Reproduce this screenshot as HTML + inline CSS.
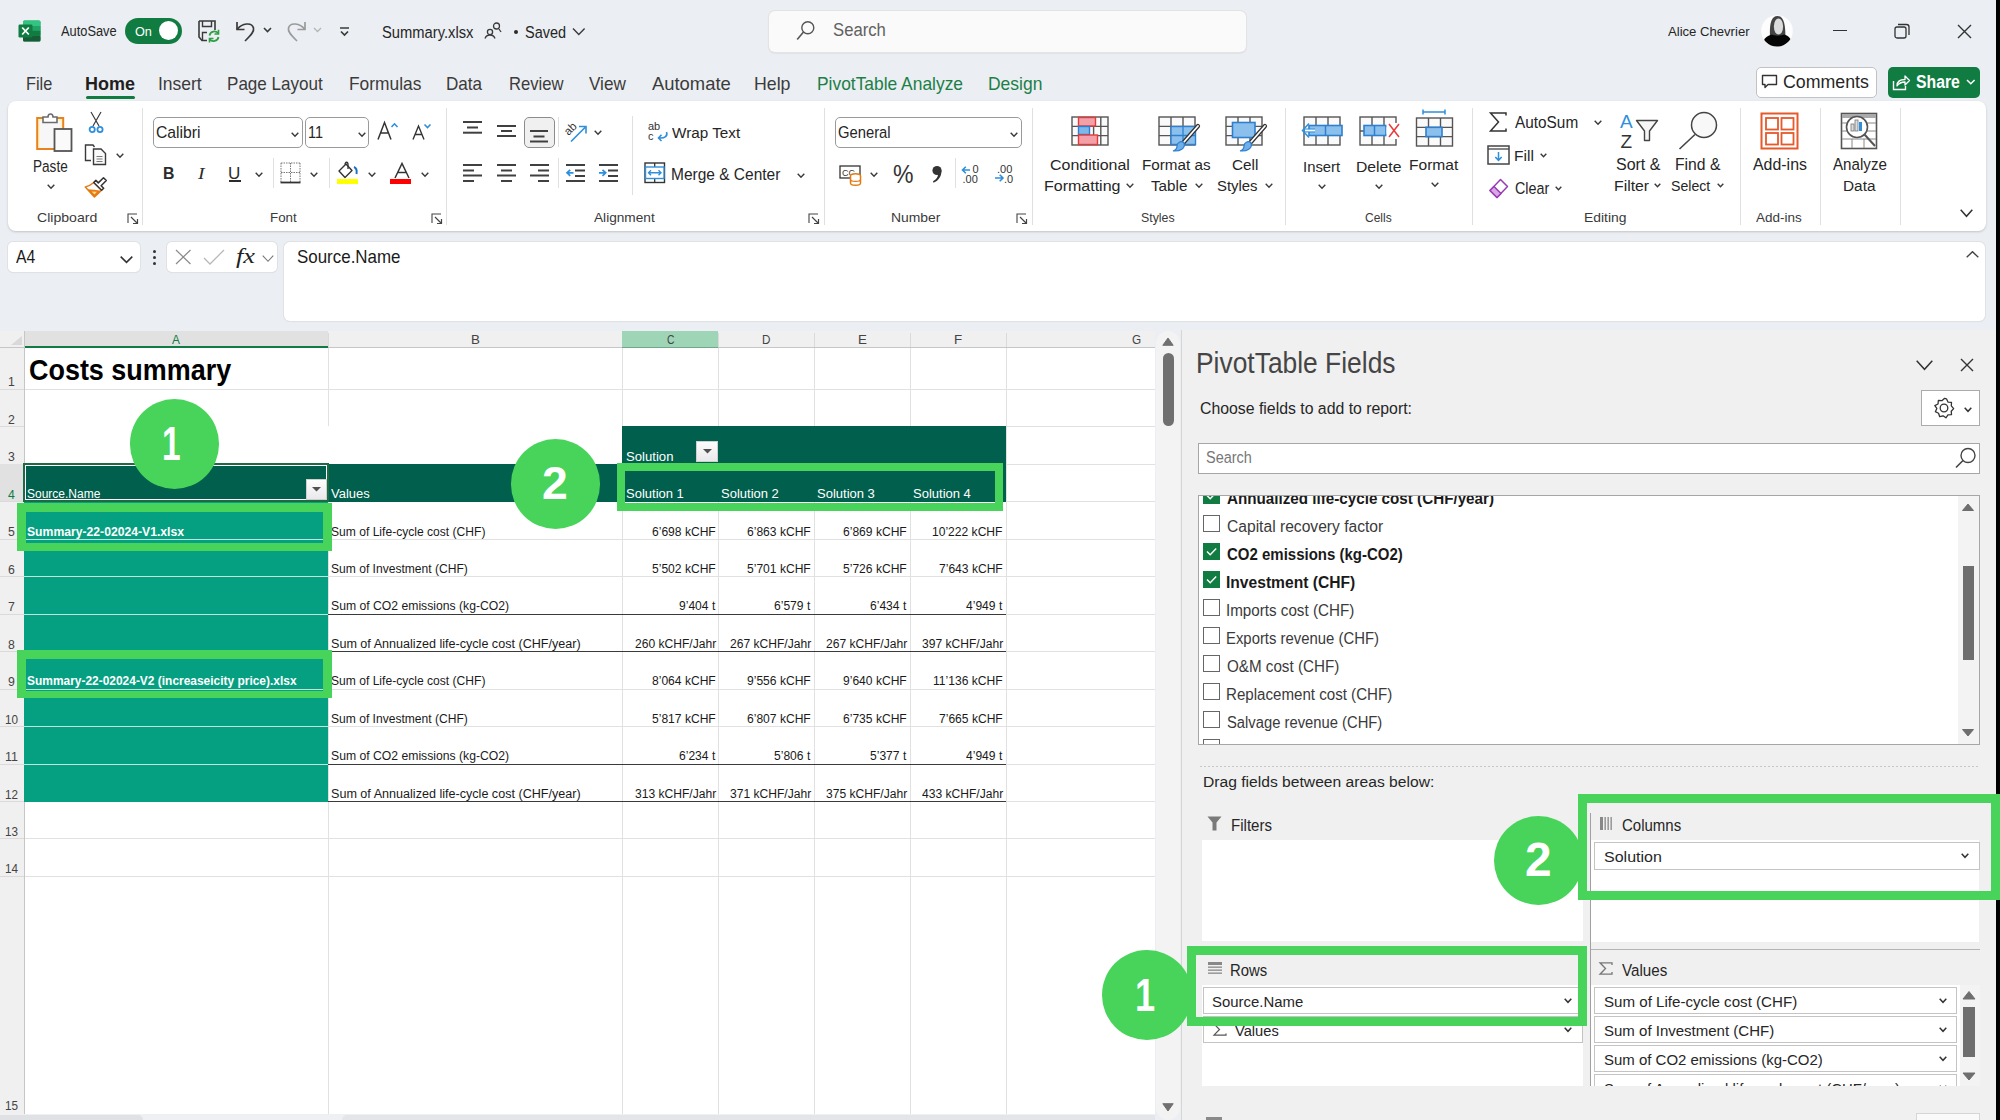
<!DOCTYPE html><html><head><meta charset="utf-8"><style>
html,body{margin:0;padding:0;}
body{width:2000px;height:1120px;overflow:hidden;position:relative;background:#ebeef2;font-family:'Liberation Sans',sans-serif;}
.tx{position:absolute;white-space:pre;transform-origin:0 0;}
svg{display:block}
</style></head><body>
<div style="position:absolute;left:768.5px;top:11px;width:477.5px;height:41px;background:#fafafa;border-radius:6px;box-shadow:0 0 0 1px #e3e3e3,0 1px 2px rgba(0,0,0,.15)"></div><div style="position:absolute;left:1755.5px;top:67px;width:121.5px;height:30.5px;background:#fff;border:1px solid #c2c2c2;border-radius:5px;box-sizing:border-box"></div><div style="position:absolute;left:1887.5px;top:66.5px;width:92.5px;height:31px;background:#107c41;border-radius:5px"></div><div style="position:absolute;left:125px;top:17.5px;width:57px;height:26px;background:#107c41;border-radius:13px"></div><div style="position:absolute;left:1996px;top:0px;width:4px;height:1120px;background:#000"></div><div style="position:absolute;left:8px;top:101px;width:1978px;height:130px;background:#fff;border-radius:8px;box-shadow:0 1px 2.5px rgba(0,0,0,0.18)"></div><div style="position:absolute;left:8px;top:242px;width:132px;height:30px;background:#fff;border-radius:5px;box-shadow:0 0 0 1px #dfe1e5, 0 1px 1px rgba(0,0,0,.08)"></div><div style="position:absolute;left:167px;top:242px;width:110px;height:30px;background:#fff;border-radius:5px;box-shadow:0 0 0 1px #dfe1e5, 0 1px 1px rgba(0,0,0,.08)"></div><div style="position:absolute;left:284px;top:242px;width:1701px;height:79px;background:#fff;border-radius:6px;box-shadow:0 0 0 1px #dfe1e5, 0 1px 1px rgba(0,0,0,.08)"></div><div style="position:absolute;left:0px;top:331px;width:1155px;height:17px;background:#f0f0f0"></div><div style="position:absolute;left:0px;top:348px;width:24px;height:766px;background:#f0f0f0"></div><div style="position:absolute;left:25px;top:348px;width:1130px;height:766px;background:#fff"></div><div style="position:absolute;left:0px;top:347px;width:1155px;height:1px;background:#c6c6c6"></div><div style="position:absolute;left:24px;top:331px;width:1px;height:783px;background:#c6c6c6"></div><div style="position:absolute;left:328px;top:333px;width:1px;height:14px;background:#dadada"></div><div style="position:absolute;left:622px;top:333px;width:1px;height:14px;background:#dadada"></div><div style="position:absolute;left:718px;top:333px;width:1px;height:14px;background:#dadada"></div><div style="position:absolute;left:814px;top:333px;width:1px;height:14px;background:#dadada"></div><div style="position:absolute;left:910px;top:333px;width:1px;height:14px;background:#dadada"></div><div style="position:absolute;left:1006px;top:333px;width:1px;height:14px;background:#dadada"></div><div style="position:absolute;left:25px;top:331px;width:303px;height:16px;background:#e1e1e1"></div><div style="position:absolute;left:25px;top:346px;width:303px;height:2px;background:#107c41"></div><div style="position:absolute;left:622px;top:331px;width:96px;height:16px;background:#9fd5b7"></div><div style="position:absolute;left:622px;top:347px;width:96px;height:1px;background:#6fa88a"></div><svg style="position:absolute;left:11px;top:336px;overflow:visible;" width="11" height="9" viewBox="0 0 11 9"><path d="M11 0 L11 9 L0 9 Z" fill="#d9d9d9"/></svg><div style="position:absolute;left:0px;top:389px;width:24px;height:1px;background:#dadada"></div><div style="position:absolute;left:0px;top:426px;width:24px;height:1px;background:#dadada"></div><div style="position:absolute;left:0px;top:464px;width:24px;height:1px;background:#dadada"></div><div style="position:absolute;left:0px;top:501px;width:24px;height:1px;background:#dadada"></div><div style="position:absolute;left:0px;top:539px;width:24px;height:1px;background:#dadada"></div><div style="position:absolute;left:0px;top:576px;width:24px;height:1px;background:#dadada"></div><div style="position:absolute;left:0px;top:614px;width:24px;height:1px;background:#dadada"></div><div style="position:absolute;left:0px;top:651px;width:24px;height:1px;background:#dadada"></div><div style="position:absolute;left:0px;top:689px;width:24px;height:1px;background:#dadada"></div><div style="position:absolute;left:0px;top:726px;width:24px;height:1px;background:#dadada"></div><div style="position:absolute;left:0px;top:764px;width:24px;height:1px;background:#dadada"></div><div style="position:absolute;left:0px;top:801px;width:24px;height:1px;background:#dadada"></div><div style="position:absolute;left:0px;top:838px;width:24px;height:1px;background:#dadada"></div><div style="position:absolute;left:0px;top:876px;width:24px;height:1px;background:#dadada"></div><div style="position:absolute;left:0px;top:464px;width:24px;height:37px;background:#e1e1e1"></div><div style="position:absolute;left:25px;top:389px;width:1130px;height:1px;background:#e1e1e1"></div><div style="position:absolute;left:622px;top:426px;width:533px;height:1px;background:#e1e1e1"></div><div style="position:absolute;left:25px;top:464px;width:1130px;height:1px;background:#e1e1e1"></div><div style="position:absolute;left:25px;top:501px;width:1130px;height:1px;background:#e1e1e1"></div><div style="position:absolute;left:25px;top:539px;width:1130px;height:1px;background:#e1e1e1"></div><div style="position:absolute;left:25px;top:576px;width:1130px;height:1px;background:#e1e1e1"></div><div style="position:absolute;left:25px;top:614px;width:1130px;height:1px;background:#e1e1e1"></div><div style="position:absolute;left:25px;top:651px;width:1130px;height:1px;background:#e1e1e1"></div><div style="position:absolute;left:25px;top:689px;width:1130px;height:1px;background:#e1e1e1"></div><div style="position:absolute;left:25px;top:726px;width:1130px;height:1px;background:#e1e1e1"></div><div style="position:absolute;left:25px;top:764px;width:1130px;height:1px;background:#e1e1e1"></div><div style="position:absolute;left:25px;top:801px;width:1130px;height:1px;background:#e1e1e1"></div><div style="position:absolute;left:25px;top:838px;width:1130px;height:1px;background:#e1e1e1"></div><div style="position:absolute;left:25px;top:876px;width:1130px;height:1px;background:#e1e1e1"></div><div style="position:absolute;left:328px;top:348px;width:1px;height:766px;background:#e1e1e1"></div><div style="position:absolute;left:622px;top:348px;width:1px;height:766px;background:#e1e1e1"></div><div style="position:absolute;left:718px;top:348px;width:1px;height:766px;background:#e1e1e1"></div><div style="position:absolute;left:814px;top:348px;width:1px;height:766px;background:#e1e1e1"></div><div style="position:absolute;left:910px;top:348px;width:1px;height:766px;background:#e1e1e1"></div><div style="position:absolute;left:1006px;top:348px;width:1px;height:766px;background:#e1e1e1"></div><div style="position:absolute;left:328px;top:426px;width:1px;height:38px;background:#fff"></div><div style="position:absolute;left:0px;top:1114px;width:1155px;height:6px;background:#eef0f3"></div><div style="position:absolute;left:0px;top:1115px;width:143px;height:10px;background:#dfe1e5;border-radius:0 5px 0 0"></div><div style="position:absolute;left:342px;top:1115px;width:813px;height:10px;background:#e3e5e9;border-radius:5px 0 0 0"></div><div style="position:absolute;left:622px;top:426px;width:384px;height:38px;background:#015f4d"></div><div style="position:absolute;left:24px;top:464px;width:982px;height:38px;background:#015f4d"></div><div style="position:absolute;left:24px;top:502px;width:304px;height:300px;background:#05a081"></div><div style="position:absolute;left:24px;top:539px;width:304px;height:1px;background:#bfe6dc"></div><div style="position:absolute;left:24px;top:576px;width:304px;height:1px;background:#bfe6dc"></div><div style="position:absolute;left:24px;top:614px;width:304px;height:1px;background:#bfe6dc"></div><div style="position:absolute;left:24px;top:651px;width:304px;height:1px;background:#bfe6dc"></div><div style="position:absolute;left:24px;top:689px;width:304px;height:1px;background:#bfe6dc"></div><div style="position:absolute;left:24px;top:726px;width:304px;height:1px;background:#bfe6dc"></div><div style="position:absolute;left:24px;top:764px;width:304px;height:1px;background:#bfe6dc"></div><div style="position:absolute;left:328px;top:614px;width:678px;height:1.3px;background:#3a3a3a"></div><div style="position:absolute;left:328px;top:651px;width:678px;height:1.3px;background:#3a3a3a"></div><div style="position:absolute;left:328px;top:764px;width:678px;height:1.3px;background:#3a3a3a"></div><div style="position:absolute;left:328px;top:801px;width:678px;height:1.3px;background:#3a3a3a"></div><div style="position:absolute;left:23px;top:463px;width:306px;height:39px;border:2px solid #1d6b45;box-sizing:border-box"></div><div style="position:absolute;left:25px;top:465px;width:302px;height:35px;border:1px solid #fff;box-sizing:border-box"></div><div style="position:absolute;left:1156px;top:331px;width:24px;height:789px;background:#f3f3f3;border-radius:12px"></div><div style="position:absolute;left:1181px;top:330px;width:1px;height:790px;background:#d6d6d6"></div><div style="position:absolute;left:1182px;top:330px;width:814px;height:790px;background:#f0f0f0"></div><div style="position:absolute;left:1921px;top:390px;width:59px;height:36px;background:#fff;border:1px solid #ababab;box-sizing:border-box"></div><div style="position:absolute;left:1198px;top:443px;width:782px;height:31px;background:#fff;border:1px solid #a6a6a6;box-sizing:border-box"></div><div style="position:absolute;left:1198px;top:495px;width:782px;height:250px;background:#fff;border:1px solid #a6a6a6;box-sizing:border-box"></div><div style="position:absolute;left:1958px;top:496px;width:21px;height:248px;background:#f3f3f3"></div><div style="position:absolute;left:1200px;top:766px;width:780px;height:1px;background-image:linear-gradient(90deg,#c8c8c8 50%,transparent 50%);background-size:4px 1px"></div><div style="position:absolute;left:1202px;top:840px;width:381px;height:101px;background:#fff"></div><div style="position:absolute;left:1590px;top:813px;width:1px;height:273px;background:#a0a0a0"></div><div style="position:absolute;left:1591px;top:840px;width:388px;height:102px;background:#fff"></div><div style="position:absolute;left:1591px;top:949px;width:389px;height:1px;background:#b4b4b4"></div><div style="position:absolute;left:1202px;top:985px;width:381px;height:101px;background:#fff"></div><div style="position:absolute;left:1591px;top:985px;width:389px;height:101px;background:#fff"></div><div style="position:absolute;left:1960px;top:985px;width:20px;height:101px;background:#f3f3f3"></div><div style="position:absolute;left:1594px;top:842px;width:386px;height:28px;background:#fff;border:1px solid #c4c4c4;box-sizing:border-box"></div><div style="position:absolute;left:1203px;top:987px;width:380px;height:27px;background:#fff;border:1px solid #c4c4c4;box-sizing:border-box"></div><div style="position:absolute;left:1203px;top:1016px;width:380px;height:27px;background:#fff;border:1px solid #c4c4c4;box-sizing:border-box"></div><div style="position:absolute;left:1594px;top:987px;width:363px;height:27px;background:#fff;border:1px solid #c4c4c4;box-sizing:border-box"></div><div style="position:absolute;left:1594px;top:1016px;width:363px;height:27px;background:#fff;border:1px solid #c4c4c4;box-sizing:border-box"></div><div style="position:absolute;left:1594px;top:1045px;width:363px;height:27px;background:#fff;border:1px solid #c4c4c4;box-sizing:border-box"></div><div style="position:absolute;left:1594px;top:1074px;width:363px;height:27px;background:#fff;border:1px solid #c4c4c4;box-sizing:border-box"></div><div class="tx" style="left:61.00px;top:24.80px;font-size:13.77px;line-height:13.77px;color:#262626;font-weight:400;font-family:'Liberation Sans';transform:scaleX(0.9327);">AutoSave</div><div class="tx" style="left:382.00px;top:24.93px;font-size:16.67px;line-height:16.67px;color:#262626;font-weight:400;font-family:'Liberation Sans';transform:scaleX(0.8845);">Summary.xlsx</div><div class="tx" style="left:524.60px;top:24.93px;font-size:16.67px;line-height:16.67px;color:#262626;font-weight:400;font-family:'Liberation Sans';transform:scaleX(0.8687);">Saved</div><div class="tx" style="left:833.00px;top:21.85px;font-size:17.83px;line-height:17.83px;color:#616161;font-weight:400;font-family:'Liberation Sans';transform:scaleX(0.9357);">Search</div><div class="tx" style="left:1668.00px;top:24.52px;font-size:13.62px;line-height:13.62px;color:#262626;font-weight:400;font-family:'Liberation Sans';transform:scaleX(0.9627);">Alice Chevrier</div><div class="tx" style="left:25.63px;top:74.79px;font-size:18.84px;line-height:18.84px;color:#3b3b3b;font-weight:400;font-family:'Liberation Sans';transform:scaleX(0.8660);">File</div><div class="tx" style="left:157.57px;top:74.79px;font-size:18.84px;line-height:18.84px;color:#3b3b3b;font-weight:400;font-family:'Liberation Sans';transform:scaleX(0.9283);">Insert</div><div class="tx" style="left:227.49px;top:74.79px;font-size:18.84px;line-height:18.84px;color:#3b3b3b;font-weight:400;font-family:'Liberation Sans';transform:scaleX(0.9061);">Page Layout</div><div class="tx" style="left:349.38px;top:74.79px;font-size:18.84px;line-height:18.84px;color:#3b3b3b;font-weight:400;font-family:'Liberation Sans';transform:scaleX(0.9215);">Formulas</div><div class="tx" style="left:445.99px;top:74.79px;font-size:18.84px;line-height:18.84px;color:#3b3b3b;font-weight:400;font-family:'Liberation Sans';transform:scaleX(0.9084);">Data</div><div class="tx" style="left:508.62px;top:74.79px;font-size:18.84px;line-height:18.84px;color:#3b3b3b;font-weight:400;font-family:'Liberation Sans';transform:scaleX(0.8833);">Review</div><div class="tx" style="left:589.30px;top:74.79px;font-size:18.84px;line-height:18.84px;color:#3b3b3b;font-weight:400;font-family:'Liberation Sans';transform:scaleX(0.9102);">View</div><div class="tx" style="left:651.60px;top:74.79px;font-size:18.84px;line-height:18.84px;color:#3b3b3b;font-weight:400;font-family:'Liberation Sans';transform:scaleX(0.9773);">Automate</div><div class="tx" style="left:754.16px;top:74.79px;font-size:18.84px;line-height:18.84px;color:#3b3b3b;font-weight:400;font-family:'Liberation Sans';transform:scaleX(0.9422);">Help</div><div class="tx" style="left:84.55px;top:74.79px;font-size:18.84px;line-height:18.84px;color:#1f1f1f;font-weight:700;font-family:'Liberation Sans';transform:scaleX(0.9540);">Home</div><div class="tx" style="left:816.58px;top:74.79px;font-size:18.84px;line-height:18.84px;color:#1b7f47;font-weight:400;font-family:'Liberation Sans';transform:scaleX(0.9238);">PivotTable Analyze</div><div class="tx" style="left:987.77px;top:74.79px;font-size:18.84px;line-height:18.84px;color:#1b7f47;font-weight:400;font-family:'Liberation Sans';transform:scaleX(0.9276);">Design</div><div class="tx" style="left:1783.00px;top:72.70px;font-size:18.12px;line-height:18.12px;color:#262626;font-weight:400;font-family:'Liberation Sans';transform:scaleX(0.9801);">Comments</div><div class="tx" style="left:1915.60px;top:72.70px;font-size:18.12px;line-height:18.12px;color:#fff;font-weight:700;font-family:'Liberation Sans';transform:scaleX(0.8715);">Share</div><div class="tx" style="left:36.80px;top:211.07px;font-size:13.33px;line-height:13.33px;color:#3a3a3a;font-weight:400;font-family:'Liberation Sans';transform:scaleX(1.0559);">Clipboard</div><div class="tx" style="left:270.00px;top:211.07px;font-size:13.33px;line-height:13.33px;color:#3a3a3a;font-weight:400;font-family:'Liberation Sans';transform:scaleX(1.0013);">Font</div><div class="tx" style="left:594.00px;top:211.07px;font-size:13.33px;line-height:13.33px;color:#3a3a3a;font-weight:400;font-family:'Liberation Sans';transform:scaleX(1.0241);">Alignment</div><div class="tx" style="left:890.96px;top:211.07px;font-size:13.33px;line-height:13.33px;color:#3a3a3a;font-weight:400;font-family:'Liberation Sans';transform:scaleX(1.0433);">Number</div><div class="tx" style="left:1141.00px;top:211.07px;font-size:13.33px;line-height:13.33px;color:#3a3a3a;font-weight:400;font-family:'Liberation Sans';transform:scaleX(0.9282);">Styles</div><div class="tx" style="left:1365.00px;top:211.07px;font-size:13.33px;line-height:13.33px;color:#3a3a3a;font-weight:400;font-family:'Liberation Sans';transform:scaleX(0.9012);">Cells</div><div class="tx" style="left:1583.96px;top:211.07px;font-size:13.33px;line-height:13.33px;color:#3a3a3a;font-weight:400;font-family:'Liberation Sans';transform:scaleX(1.0422);">Editing</div><div class="tx" style="left:1756.00px;top:211.07px;font-size:13.33px;line-height:13.33px;color:#3a3a3a;font-weight:400;font-family:'Liberation Sans';transform:scaleX(1.0104);">Add-ins</div><div class="tx" style="left:33.15px;top:158.75px;font-size:15.94px;line-height:15.94px;color:#262626;font-weight:400;font-family:'Liberation Sans';transform:scaleX(0.8523);">Paste</div><div class="tx" style="left:671.80px;top:125.12px;font-size:15.51px;line-height:15.51px;color:#262626;font-weight:400;font-family:'Liberation Sans';transform:scaleX(0.9846);">Wrap Text</div><div class="tx" style="left:671.04px;top:166.23px;font-size:16.09px;line-height:16.09px;color:#262626;font-weight:400;font-family:'Liberation Sans';transform:scaleX(0.9635);">Merge &amp; Center</div><div class="tx" style="left:1050.00px;top:157.19px;font-size:15.07px;line-height:15.07px;color:#262626;font-weight:400;font-family:'Liberation Sans';transform:scaleX(1.0598);">Conditional</div><div class="tx" style="left:1043.94px;top:177.99px;font-size:15.07px;line-height:15.07px;color:#262626;font-weight:400;font-family:'Liberation Sans';transform:scaleX(1.0622);">Formatting</div><div class="tx" style="left:1141.99px;top:157.19px;font-size:15.07px;line-height:15.07px;color:#262626;font-weight:400;font-family:'Liberation Sans';transform:scaleX(1.0111);">Format as</div><div class="tx" style="left:1151.00px;top:177.99px;font-size:15.07px;line-height:15.07px;color:#262626;font-weight:400;font-family:'Liberation Sans';transform:scaleX(1.0104);">Table</div><div class="tx" style="left:1232.00px;top:157.19px;font-size:15.07px;line-height:15.07px;color:#262626;font-weight:400;font-family:'Liberation Sans';transform:scaleX(1.0156);">Cell</div><div class="tx" style="left:1217.00px;top:177.99px;font-size:15.07px;line-height:15.07px;color:#262626;font-weight:400;font-family:'Liberation Sans';transform:scaleX(0.9880);">Styles</div><div class="tx" style="left:1303.01px;top:159.49px;font-size:15.07px;line-height:15.07px;color:#262626;font-weight:400;font-family:'Liberation Sans';transform:scaleX(0.9870);">Insert</div><div class="tx" style="left:1355.96px;top:159.49px;font-size:15.07px;line-height:15.07px;color:#262626;font-weight:400;font-family:'Liberation Sans';transform:scaleX(1.0436);">Delete</div><div class="tx" style="left:1408.98px;top:157.07px;font-size:15.22px;line-height:15.22px;color:#262626;font-weight:400;font-family:'Liberation Sans';transform:scaleX(1.0215);">Format</div><div class="tx" style="left:1514.60px;top:114.30px;font-size:16.23px;line-height:16.23px;color:#262626;font-weight:400;font-family:'Liberation Sans';transform:scaleX(0.9471);">AutoSum</div><div class="tx" style="left:1513.59px;top:147.74px;font-size:15.36px;line-height:15.36px;color:#262626;font-weight:400;font-family:'Liberation Sans';transform:scaleX(1.0106);">Fill</div><div class="tx" style="left:1515.00px;top:181.00px;font-size:15.65px;line-height:15.65px;color:#262626;font-weight:400;font-family:'Liberation Sans';transform:scaleX(0.9148);">Clear</div><div class="tx" style="left:1616.00px;top:156.90px;font-size:15.65px;line-height:15.65px;color:#262626;font-weight:400;font-family:'Liberation Sans';transform:scaleX(1.0220);">Sort &amp;</div><div class="tx" style="left:1613.96px;top:178.17px;font-size:15.22px;line-height:15.22px;color:#262626;font-weight:400;font-family:'Liberation Sans';transform:scaleX(1.0381);">Filter</div><div class="tx" style="left:1674.99px;top:156.90px;font-size:15.65px;line-height:15.65px;color:#262626;font-weight:400;font-family:'Liberation Sans';transform:scaleX(1.0051);">Find &amp;</div><div class="tx" style="left:1671.00px;top:178.17px;font-size:15.22px;line-height:15.22px;color:#262626;font-weight:400;font-family:'Liberation Sans';transform:scaleX(0.9287);">Select</div><div class="tx" style="left:1753.00px;top:156.65px;font-size:15.94px;line-height:15.94px;color:#262626;font-weight:400;font-family:'Liberation Sans';transform:scaleX(0.9987);">Add-ins</div><div class="tx" style="left:1833.00px;top:156.65px;font-size:15.94px;line-height:15.94px;color:#262626;font-weight:400;font-family:'Liberation Sans';transform:scaleX(0.9501);">Analyze</div><div class="tx" style="left:1842.99px;top:178.07px;font-size:15.22px;line-height:15.22px;color:#262626;font-weight:400;font-family:'Liberation Sans';transform:scaleX(1.0100);">Data</div><div class="tx" style="left:15.50px;top:248.89px;font-size:17.54px;line-height:17.54px;color:#1a1a1a;font-weight:400;font-family:'Liberation Sans';transform:scaleX(0.8989);">A4</div><div class="tx" style="left:296.80px;top:247.73px;font-size:18.55px;line-height:18.55px;color:#1a1a1a;font-weight:400;font-family:'Liberation Sans';transform:scaleX(0.9134);">Source.Name</div><svg style="position:absolute;left:18px;top:20px;overflow:visible;" width="23" height="22" viewBox="0 0 23 22"><rect x="5" y="0.5" width="17.5" height="21" rx="1.5" fill="#21a366"/>
<rect x="5" y="0.5" width="17.5" height="5.5" rx="1.5" fill="#33c481"/>
<rect x="5" y="15.5" width="17.5" height="6" rx="1.5" fill="#185c37"/>
<rect x="12" y="6" width="10.5" height="4.8" fill="#21a366"/>
<rect x="12" y="10.8" width="10.5" height="4.8" fill="#107c41"/>
<rect x="0.5" y="4.5" width="14" height="13" rx="1.3" fill="#107c41"/>
<path d="M4.2 7.5 L10.8 14.5 M10.8 7.5 L4.2 14.5" stroke="#fff" stroke-width="1.8"/></svg><div style="position:absolute;left:159px;top:21px;width:19px;height:19px;background:#fff;border-radius:50%"></div><div class="tx" style="left:134.50px;top:25.61px;font-size:12.46px;line-height:12.46px;color:#fff;font-weight:400;font-family:'Liberation Sans';transform:scaleX(1.0188);">On</div><svg style="position:absolute;left:197px;top:20px;overflow:visible;" width="24" height="22" viewBox="0 0 24 22"><path d="M2 1 H18 V10 M2 1 V17 L5 20.5 H10" fill="none" stroke="#3a3a3a" stroke-width="1.6"/>
<path d="M5.5 1 V6.5 H14.5 V1" fill="none" stroke="#3a3a3a" stroke-width="1.4"/>
<path d="M5.5 20 V12.5 H10" fill="none" stroke="#3a3a3a" stroke-width="1.4"/>
<path d="M12.5 15.5 A5 5 0 0 1 21.5 13.5" fill="none" stroke="#2ea043" stroke-width="1.8"/>
<path d="M21.5 9.8 V14 H17.5" fill="none" stroke="#2ea043" stroke-width="1.6"/>
<path d="M21.5 17 A5 5 0 0 1 12.5 19" fill="none" stroke="#2ea043" stroke-width="1.8"/>
<path d="M12.5 22.5 V18.5 H16.5" fill="none" stroke="#2ea043" stroke-width="1.6"/></svg><svg style="position:absolute;left:235px;top:20px;overflow:visible;" width="22" height="22" viewBox="0 0 22 22"><path d="M2 2 V9.5 H9.5" fill="none" stroke="#3a3a3a" stroke-width="1.7"/>
<path d="M2.3 9.2 C7 3 17 2 18.5 8 C19.5 12 15 16 10 21" fill="none" stroke="#3a3a3a" stroke-width="1.7"/></svg><svg style="position:absolute;left:263px;top:27px;overflow:visible;" width="10" height="7" viewBox="0 0 10 7"><path d="M1 1 L4.5 4.5 L8 1" fill="none" stroke="#3a3a3a" stroke-width="1.6"/></svg><svg style="position:absolute;left:285px;top:20px;overflow:visible;" width="22" height="22" viewBox="0 0 22 22"><path d="M20 2 V9.5 H12.5" fill="none" stroke="#9a9a9a" stroke-width="1.7"/>
<path d="M19.7 9.2 C15 3 5 2 3.5 8 C2.5 12 7 16 12 21" fill="none" stroke="#9a9a9a" stroke-width="1.7"/></svg><svg style="position:absolute;left:313px;top:27px;overflow:visible;" width="10" height="7" viewBox="0 0 10 7"><path d="M1 1 L4.5 4.5 L8 1" fill="none" stroke="#b5b5b5" stroke-width="1.3"/></svg><svg style="position:absolute;left:339px;top:27px;overflow:visible;" width="12" height="11" viewBox="0 0 12 11"><path d="M1 1 H10" stroke="#3a3a3a" stroke-width="1.5"/><path d="M2 4.5 L5.5 8 L9 4.5" fill="none" stroke="#3a3a3a" stroke-width="1.7"/></svg><svg style="position:absolute;left:484px;top:22px;overflow:visible;" width="18" height="17" viewBox="0 0 18 17"><circle cx="12.5" cy="4" r="3" fill="none" stroke="#3a3a3a" stroke-width="1.3"/>
<path d="M15 7 L17 10" stroke="#3a3a3a" stroke-width="1.3"/>
<circle cx="6" cy="10" r="2.6" fill="none" stroke="#3a3a3a" stroke-width="1.3"/>
<path d="M1 16.5 C2 13.5 4 13 6 13 C8 13 10 13.5 11 16.5" fill="none" stroke="#3a3a3a" stroke-width="1.3"/></svg><div style="position:absolute;left:513.5px;top:30.3px;width:4px;height:4px;background:#2b2b2b;border-radius:50%"></div><svg style="position:absolute;left:572px;top:27px;overflow:visible;" width="14" height="9" viewBox="0 0 14 9"><path d="M1 1.5 L6.8 7.5 L12.6 1.5" fill="none" stroke="#3a3a3a" stroke-width="1.4"/></svg><svg style="position:absolute;left:796px;top:20px;overflow:visible;" width="20" height="21" viewBox="0 0 20 21"><circle cx="11.8" cy="7.8" r="6" fill="none" stroke="#555" stroke-width="1.4"/><path d="M7.5 12 L1.2 19.5" stroke="#555" stroke-width="1.6"/></svg><svg style="position:absolute;left:1761px;top:14px;overflow:visible;" width="32" height="34" viewBox="0 0 32 34"><circle cx="16" cy="17" r="15.8" fill="#fdfdfd"/>
<clipPath id="av"><circle cx="16" cy="17" r="15.6"/></clipPath>
<g clip-path="url(#av)">
<path d="M9 23 C8.5 12 9.5 2 16.5 2 C23.5 2 24.5 12 24.5 25 L9 25 Z" fill="#444"/>
<ellipse cx="17.5" cy="12.5" rx="4.6" ry="8" fill="#dcdcdc"/>
<path d="M3 27 C3 24 7 21.5 11 20.5 C13 22 20 22 23 20.5 C27 21.5 30 24 30.5 28 C30 33 25 34 16 34 C8 34 4 32 3 27 Z" fill="#050505"/>
</g></svg><div style="position:absolute;left:1833px;top:30px;width:14px;height:1.3px;background:#333"></div><svg style="position:absolute;left:1894px;top:23px;overflow:visible;" width="17" height="16" viewBox="0 0 17 16"><rect x="1" y="4" width="11" height="11" rx="2" fill="none" stroke="#333" stroke-width="1.3"/><path d="M4 1.5 H12.5 A2.5 2.5 0 0 1 15 4 V12" fill="none" stroke="#333" stroke-width="1.3"/></svg><svg style="position:absolute;left:1957px;top:24px;overflow:visible;" width="15" height="15" viewBox="0 0 15 15"><path d="M1 1 L14 14 M14 1 L1 14" stroke="#333" stroke-width="1.4"/></svg><div style="position:absolute;left:85.5px;top:95.5px;width:49.5px;height:3px;background:#107c41;border-radius:2px"></div><svg style="position:absolute;left:1761px;top:74px;overflow:visible;" width="18" height="16" viewBox="0 0 18 16"><path d="M1.5 1.5 H15.5 V10.5 H7 L4 13.5 V10.5 H1.5 Z" fill="none" stroke="#333" stroke-width="1.4" stroke-linejoin="round"/></svg><svg style="position:absolute;left:1892px;top:74px;overflow:visible;" width="19" height="17" viewBox="0 0 19 17"><path d="M1.5 7 V15.5 H13.5 V12" fill="none" stroke="#fff" stroke-width="1.4"/><path d="M5 12 C5 7 8 5.5 13 5.5 V2 L17.5 6.5 L13 11 V8 C9.5 8 7 9 5 12 Z" fill="none" stroke="#fff" stroke-width="1.3" stroke-linejoin="round"/></svg><svg style="position:absolute;left:1966px;top:79px;overflow:visible;" width="10" height="7" viewBox="0 0 10 7"><path d="M1 1 L4.8 4.8 L8.6 1" fill="none" stroke="#fff" stroke-width="1.5"/></svg><div style="position:absolute;left:142px;top:108px;width:1px;height:117px;background:#e0e0e0"></div><div style="position:absolute;left:445.5px;top:108px;width:1px;height:117px;background:#e0e0e0"></div><div style="position:absolute;left:823.5px;top:108px;width:1px;height:117px;background:#e0e0e0"></div><div style="position:absolute;left:1031.5px;top:108px;width:1px;height:117px;background:#e0e0e0"></div><div style="position:absolute;left:1285px;top:108px;width:1px;height:117px;background:#e0e0e0"></div><div style="position:absolute;left:1472px;top:108px;width:1px;height:117px;background:#e0e0e0"></div><div style="position:absolute;left:1739.5px;top:108px;width:1px;height:117px;background:#e0e0e0"></div><div style="position:absolute;left:1819.5px;top:108px;width:1px;height:117px;background:#e0e0e0"></div><div style="position:absolute;left:1900px;top:108px;width:1px;height:117px;background:#e0e0e0"></div><svg style="position:absolute;left:127px;top:213px;overflow:visible;" width="12" height="12" viewBox="0 0 12 12"><path d="M1 10 V1 H10" fill="none" stroke="#444" stroke-width="1.1"/><path d="M4 4 L10.5 10.5 M6 10.5 H10.5 V6" fill="none" stroke="#444" stroke-width="1.2"/></svg><svg style="position:absolute;left:431px;top:213px;overflow:visible;" width="12" height="12" viewBox="0 0 12 12"><path d="M1 10 V1 H10" fill="none" stroke="#444" stroke-width="1.1"/><path d="M4 4 L10.5 10.5 M6 10.5 H10.5 V6" fill="none" stroke="#444" stroke-width="1.2"/></svg><svg style="position:absolute;left:808px;top:213px;overflow:visible;" width="12" height="12" viewBox="0 0 12 12"><path d="M1 10 V1 H10" fill="none" stroke="#444" stroke-width="1.1"/><path d="M4 4 L10.5 10.5 M6 10.5 H10.5 V6" fill="none" stroke="#444" stroke-width="1.2"/></svg><svg style="position:absolute;left:1016px;top:213px;overflow:visible;" width="12" height="12" viewBox="0 0 12 12"><path d="M1 10 V1 H10" fill="none" stroke="#444" stroke-width="1.1"/><path d="M4 4 L10.5 10.5 M6 10.5 H10.5 V6" fill="none" stroke="#444" stroke-width="1.2"/></svg><svg style="position:absolute;left:36px;top:112px;overflow:visible;" width="37" height="40" viewBox="0 0 37 40"><rect x="1.2" y="6" width="26" height="31" fill="#fdf3c9" stroke="#e8821e" stroke-width="2"/>
<rect x="4" y="9" width="20.5" height="27" fill="#f7f7f7"/>
<path d="M7 5 H12 C12 1 17 1 17 5 H21 V10.5 H7 Z" fill="#fff" stroke="#6b6b6b" stroke-width="1.6"/>
<rect x="18.5" y="17" width="17" height="22" fill="#fafafa" stroke="#555" stroke-width="1.8"/></svg><svg style="position:absolute;left:47px;top:183.5px;overflow:visible;" width="8" height="5" viewBox="0 0 8 5"><path d="M0.7 0.7 L4.0 4.3 L7.3 0.7" fill="none" stroke="#3a3a3a" stroke-width="1.4"/></svg><svg style="position:absolute;left:88px;top:111px;overflow:visible;" width="16" height="23" viewBox="0 0 16 23"><path d="M3 1 L11 15 M13 1 L5 15" stroke="#3a3a3a" stroke-width="1.2"/>
<circle cx="4.2" cy="18.5" r="2.6" fill="none" stroke="#2f8fdb" stroke-width="1.8"/>
<circle cx="12" cy="18.5" r="2.6" fill="none" stroke="#2f8fdb" stroke-width="1.8"/></svg><svg style="position:absolute;left:84px;top:144px;overflow:visible;" width="23" height="22" viewBox="0 0 23 22"><path d="M7 16.5 H1.5 V1 H9 L10.5 3" fill="none" stroke="#3a3a3a" stroke-width="1.4"/>
<path d="M9.5 5 H17 L21.5 9.5 V20.5 H9.5 Z" fill="#fafafa" stroke="#3a3a3a" stroke-width="1.4"/>
<path d="M12.5 12.5 H18.5 M12.5 15 H18.5 M12.5 17.5 H18.5" stroke="#777" stroke-width="1"/></svg><svg style="position:absolute;left:116px;top:153px;overflow:visible;" width="8" height="5" viewBox="0 0 8 5"><path d="M0.7 0.7 L4.0 4.3 L7.3 0.7" fill="none" stroke="#3a3a3a" stroke-width="1.4"/></svg><svg style="position:absolute;left:84px;top:177px;overflow:visible;" width="24" height="22" viewBox="0 0 24 22"><path d="M9.75 5.5 C6.5 8.3 4.2 9.4 1.3 9.9 L10.4 19.9 L17.6 13.3 Z" fill="#fff" stroke="#e37b14" stroke-width="1.5" stroke-linejoin="round"/>
<path d="M3.3 12.2 L10.4 19.9 L17.2 13.7 C12.5 12.9 7.5 12.4 3.3 12.2 Z" fill="#e8780f"/>
<path d="M7.5 14.5 L10.5 17.5 L13 14.8 Z" fill="#f7dc7a"/>
<path d="M9.75 5.5 L11.85 3.4 L14.3 5.85 L19.5 0.7 L22.3 3.5 L17.1 8.7 L19.7 11.2 L17.6 13.3 Z" fill="#fff" stroke="#333" stroke-width="1.5" stroke-linejoin="round"/></svg><div style="position:absolute;left:153px;top:116.5px;width:149.5px;height:31px;background:#fff;border:1px solid #9a9a9a;border-radius:5px;box-sizing:border-box"></div><div style="position:absolute;left:305px;top:116.5px;width:64px;height:31px;background:#fff;border:1px solid #9a9a9a;border-radius:5px;box-sizing:border-box"></div><svg style="position:absolute;left:290.5px;top:131.5px;overflow:visible;" width="8" height="5" viewBox="0 0 8 5"><path d="M0.7 0.7 L4.0 4.3 L7.3 0.7" fill="none" stroke="#3a3a3a" stroke-width="1.4"/></svg><div class="tx" style="left:156.00px;top:124.38px;font-size:16.38px;line-height:16.38px;color:#262626;font-weight:400;font-family:'Liberation Sans';transform:scaleX(0.9622);">Calibri</div><div class="tx" style="left:308.12px;top:124.38px;font-size:16.38px;line-height:16.38px;color:#262626;font-weight:400;font-family:'Liberation Sans';transform:scaleX(0.8814);">11</div><svg style="position:absolute;left:357.5px;top:131.5px;overflow:visible;" width="8" height="5" viewBox="0 0 8 5"><path d="M0.7 0.7 L4.0 4.3 L7.3 0.7" fill="none" stroke="#3a3a3a" stroke-width="1.4"/></svg><svg style="position:absolute;left:377px;top:121px;overflow:visible;" width="22" height="19" viewBox="0 0 22 19"><path d="M1 18.5 L7.5 1.5 L14 18.5 M3.8 12 H11.2" fill="none" stroke="#333" stroke-width="1.5"/><path d="M14.5 6 L17.5 2.8 L20.5 6" fill="none" stroke="#2f8fdb" stroke-width="1.6"/></svg><svg style="position:absolute;left:412px;top:123px;overflow:visible;" width="21" height="17" viewBox="0 0 21 17"><path d="M1 16.5 L6.5 3 L12 16.5 M3.2 11.5 H9.8" fill="none" stroke="#333" stroke-width="1.4"/><path d="M12.5 1.5 L15.5 4.5 L18.5 1.5" fill="none" stroke="#2f8fdb" stroke-width="1.6"/></svg><div class="tx" style="left:163.09px;top:164.72px;font-size:17.39px;line-height:17.39px;color:#2b2b2b;font-weight:700;font-family:'Liberation Sans';transform:scaleX(0.9091);">B</div><div class="tx" style="left:198.12px;top:164.72px;font-size:17.39px;line-height:17.39px;color:#2b2b2b;font-weight:400;font-family:'Liberation Serif';font-style:italic;transform:scaleX(1.1250);">I</div><div class="tx" style="left:228.00px;top:164.76px;font-size:17.10px;line-height:17.10px;color:#2b2b2b;font-weight:400;font-family:'Liberation Sans';transform:scaleX(1.0000);">U</div><div style="position:absolute;left:228.5px;top:180px;width:12px;height:1.5px;background:#2b2b2b"></div><svg style="position:absolute;left:255px;top:172px;overflow:visible;" width="8" height="5" viewBox="0 0 8 5"><path d="M0.7 0.7 L4.0 4.3 L7.3 0.7" fill="none" stroke="#3a3a3a" stroke-width="1.4"/></svg><div style="position:absolute;left:273px;top:158px;width:1px;height:30px;background:#e0e0e0"></div><svg style="position:absolute;left:280px;top:162px;overflow:visible;" width="21" height="22" viewBox="0 0 21 22"><path d="M1 1 H20 M1 10.5 H20 M1 1 V20 M10.5 1 V20 M20 1 V20" fill="none" stroke="#777" stroke-width="1" stroke-dasharray="1.5 1"/>
<path d="M0.5 20.5 H20.5" stroke="#333" stroke-width="1.8"/></svg><svg style="position:absolute;left:310px;top:172px;overflow:visible;" width="8" height="5" viewBox="0 0 8 5"><path d="M0.7 0.7 L4.0 4.3 L7.3 0.7" fill="none" stroke="#3a3a3a" stroke-width="1.4"/></svg><div style="position:absolute;left:329px;top:158px;width:1px;height:30px;background:#e0e0e0"></div><svg style="position:absolute;left:336px;top:161px;overflow:visible;" width="23" height="24" viewBox="0 0 23 24"><path d="M3 10 L10 3 L16 9.5 L9 16.5 Z" fill="#fff" stroke="#333" stroke-width="1.4" stroke-linejoin="round"/>
<path d="M9 3.5 C9 0.5 12 0.5 12 3.5 V8" fill="none" stroke="#333" stroke-width="1.3"/>
<path d="M18 6 C20.5 7 21 10 20.5 13" fill="none" stroke="#1f6fc5" stroke-width="2"/>
<rect x="1" y="18" width="21" height="5" fill="#ffff00"/></svg><svg style="position:absolute;left:368px;top:172px;overflow:visible;" width="8" height="5" viewBox="0 0 8 5"><path d="M0.7 0.7 L4.0 4.3 L7.3 0.7" fill="none" stroke="#3a3a3a" stroke-width="1.4"/></svg><svg style="position:absolute;left:389px;top:162px;overflow:visible;" width="23" height="23" viewBox="0 0 23 23"><path d="M6 16 L13 1.5 L20 16 M8.7 10.5 H17.3" fill="none" stroke="#333" stroke-width="1.5"/><rect x="1" y="17" width="21" height="5" fill="#ff0000"/></svg><svg style="position:absolute;left:421px;top:172px;overflow:visible;" width="8" height="5" viewBox="0 0 8 5"><path d="M0.7 0.7 L4.0 4.3 L7.3 0.7" fill="none" stroke="#3a3a3a" stroke-width="1.4"/></svg><div style="position:absolute;left:524px;top:116.5px;width:30.5px;height:31px;background:#f0f0f0;border:1px solid #8c8c8c;border-radius:5px;box-sizing:border-box"></div><svg style="position:absolute;left:463px;top:0px;overflow:visible;" width="20" height="1" viewBox="0 0 20 1"><rect x="0" y="121" width="19" height="2" fill="#404040"/><rect x="4" y="126.5" width="11" height="2" fill="#404040"/><rect x="0" y="131.7" width="19" height="2" fill="#404040"/></svg><svg style="position:absolute;left:497px;top:0px;overflow:visible;" width="20" height="1" viewBox="0 0 20 1"><rect x="0" y="125" width="19" height="2" fill="#404040"/><rect x="4" y="130" width="11" height="2" fill="#404040"/><rect x="0" y="135" width="19" height="2" fill="#404040"/></svg><svg style="position:absolute;left:530px;top:0px;overflow:visible;" width="20" height="1" viewBox="0 0 20 1"><rect x="0" y="130" width="18" height="2" fill="#404040"/><rect x="3.5" y="135.5" width="11" height="2" fill="#404040"/><rect x="0" y="140.5" width="18" height="2" fill="#404040"/></svg><svg style="position:absolute;left:463px;top:0px;overflow:visible;" width="20" height="1" viewBox="0 0 20 1"><rect x="0" y="164" width="19" height="2" fill="#404040"/><rect x="0" y="169.5" width="11" height="2" fill="#404040"/><rect x="0" y="174.5" width="19" height="2" fill="#404040"/><rect x="0" y="180" width="11" height="2" fill="#404040"/></svg><svg style="position:absolute;left:497px;top:0px;overflow:visible;" width="20" height="1" viewBox="0 0 20 1"><rect x="0" y="164" width="19" height="2" fill="#404040"/><rect x="4" y="169.5" width="11" height="2" fill="#404040"/><rect x="0" y="174.5" width="19" height="2" fill="#404040"/><rect x="4" y="180" width="11" height="2" fill="#404040"/></svg><svg style="position:absolute;left:530px;top:0px;overflow:visible;" width="20" height="1" viewBox="0 0 20 1"><rect x="0" y="164" width="19" height="2" fill="#404040"/><rect x="8" y="169.5" width="11" height="2" fill="#404040"/><rect x="0" y="174.5" width="19" height="2" fill="#404040"/><rect x="8" y="180" width="11" height="2" fill="#404040"/></svg><div style="position:absolute;left:557.5px;top:117px;width:1px;height:30px;background:#e0e0e0"></div><div style="position:absolute;left:557.5px;top:158px;width:1px;height:30px;background:#e0e0e0"></div><div style="position:absolute;left:632px;top:116px;width:1px;height:79px;background:#e0e0e0"></div><svg style="position:absolute;left:564px;top:120px;overflow:visible;" width="25" height="23" viewBox="0 0 25 23"><text x="0" y="0" transform="translate(4.5,16) rotate(-45)" font-family="Liberation Sans" font-size="11.5" fill="#333">ab</text>
<path d="M7 21.5 L21 7.5 M15 6.5 H22 V13.5" fill="none" stroke="#2f8fdb" stroke-width="1.6"/></svg><svg style="position:absolute;left:594px;top:130px;overflow:visible;" width="8" height="5" viewBox="0 0 8 5"><path d="M0.7 0.7 L4.0 4.3 L7.3 0.7" fill="none" stroke="#3a3a3a" stroke-width="1.4"/></svg><svg style="position:absolute;left:566px;top:163px;overflow:visible;" width="20" height="20" viewBox="0 0 20 20"><rect x="0" y="1" width="19" height="2" fill="#404040"/><rect x="9" y="6.5" width="10" height="2" fill="#404040"/><rect x="9" y="12" width="10" height="2" fill="#404040"/><rect x="0" y="17" width="19" height="2" fill="#404040"/>
<path d="M1 9.8 H7.5 M4.2 6.8 L1 9.8 L4.2 12.8" fill="none" stroke="#2f8fdb" stroke-width="1.7"/></svg><svg style="position:absolute;left:599px;top:163px;overflow:visible;" width="20" height="20" viewBox="0 0 20 20"><rect x="0" y="1" width="19" height="2" fill="#404040"/><rect x="9" y="6.5" width="10" height="2" fill="#404040"/><rect x="9" y="12" width="10" height="2" fill="#404040"/><rect x="0" y="17" width="19" height="2" fill="#404040"/>
<path d="M0 9.8 H6.5 M3.5 6.8 L6.7 9.8 L3.5 12.8" fill="none" stroke="#2f8fdb" stroke-width="1.7"/></svg><svg style="position:absolute;left:647px;top:121px;overflow:visible;" width="22" height="23" viewBox="0 0 22 23"><text x="1" y="9" font-family="Liberation Sans" font-size="11" fill="#333">ab</text>
<text x="1" y="19" font-family="Liberation Sans" font-size="11" fill="#333">c</text>
<path d="M19.5 11 C21 15 18 17.5 12 17 M14.5 13.8 L11.5 17 L14.5 20" fill="none" stroke="#2f8fdb" stroke-width="1.6"/></svg><svg style="position:absolute;left:644px;top:162px;overflow:visible;" width="22" height="22" viewBox="0 0 22 22"><rect x="1" y="1" width="19.5" height="19.5" fill="#fff" stroke="#333" stroke-width="1.4"/>
<path d="M10.7 1 V5 M10.7 16.5 V20.5" stroke="#333" stroke-width="1.3"/>
<rect x="1.5" y="5" width="18.5" height="11.5" fill="#fff" stroke="#2f8fdb" stroke-width="1.4"/>
<path d="M4.5 10.8 H17 M7 8.3 L4.5 10.8 L7 13.3 M14.5 8.3 L17 10.8 L14.5 13.3" fill="none" stroke="#2f8fdb" stroke-width="1.4"/></svg><svg style="position:absolute;left:797px;top:173px;overflow:visible;" width="8" height="5" viewBox="0 0 8 5"><path d="M0.7 0.7 L4.0 4.3 L7.3 0.7" fill="none" stroke="#3a3a3a" stroke-width="1.4"/></svg><div style="position:absolute;left:835px;top:116.5px;width:186.5px;height:31px;background:#fff;border:1px solid #9a9a9a;border-radius:5px;box-sizing:border-box"></div><svg style="position:absolute;left:1009.5px;top:131.5px;overflow:visible;" width="8" height="5" viewBox="0 0 8 5"><path d="M0.7 0.7 L4.0 4.3 L7.3 0.7" fill="none" stroke="#3a3a3a" stroke-width="1.4"/></svg><div class="tx" style="left:838.00px;top:124.83px;font-size:16.67px;line-height:16.67px;color:#262626;font-weight:400;font-family:'Liberation Sans';transform:scaleX(0.8880);">General</div><svg style="position:absolute;left:839px;top:165px;overflow:visible;" width="24" height="21" viewBox="0 0 24 21"><rect x="1" y="1" width="20" height="12" fill="none" stroke="#333" stroke-width="1.3"/>
<text x="3" y="11" font-family="Liberation Sans" font-size="9" fill="#333">CC</text>
<ellipse cx="16.5" cy="11" rx="5" ry="2.3" fill="#fff" stroke="#e37b14" stroke-width="1.5"/>
<path d="M11.5 11 V18 C11.5 21 21.5 21 21.5 18 V11" fill="#fff" stroke="#e37b14" stroke-width="1.5"/>
<path d="M11.5 14.5 C11.5 17 21.5 17 21.5 14.5" fill="none" stroke="#e37b14" stroke-width="1.3"/></svg><svg style="position:absolute;left:870px;top:172px;overflow:visible;" width="8" height="5" viewBox="0 0 8 5"><path d="M0.7 0.7 L4.0 4.3 L7.3 0.7" fill="none" stroke="#3a3a3a" stroke-width="1.4"/></svg><div class="tx" style="left:893.00px;top:161.94px;font-size:25.36px;line-height:25.36px;color:#333;font-weight:400;font-family:'Liberation Sans';transform:scaleX(0.9091);">%</div><svg style="position:absolute;left:931px;top:165px;overflow:visible;" width="12" height="19" viewBox="0 0 12 19"><circle cx="6" cy="5.5" r="4.6" fill="#333"/><path d="M10.4 5.5 C10.6 11 8 15.5 2.5 17.8 L2 16.3 C5.5 14.5 7 12 7 9 Z" fill="#333"/></svg><div style="position:absolute;left:954.5px;top:158px;width:1px;height:30px;background:#e0e0e0"></div><svg style="position:absolute;left:961px;top:162px;overflow:visible;" width="23" height="22" viewBox="0 0 23 22"><path d="M1.5 8 H9 M4.8 4.7 L1.5 8 L4.8 11.3" fill="none" stroke="#2f8fdb" stroke-width="1.6"/>
<text x="11.5" y="11" font-family="Liberation Sans" font-size="11" fill="#333">0</text>
<text x="1.5" y="21" font-family="Liberation Sans" font-size="11" fill="#333">.00</text></svg><svg style="position:absolute;left:994px;top:162px;overflow:visible;" width="23" height="22" viewBox="0 0 23 22"><text x="3" y="11" font-family="Liberation Sans" font-size="11" fill="#333">.00</text>
<path d="M1 16 H9 M5.7 12.7 L9 16 L5.7 19.3" fill="none" stroke="#2f8fdb" stroke-width="1.6"/>
<text x="10" y="21" font-family="Liberation Sans" font-size="11" fill="#333">.0</text></svg><svg style="position:absolute;left:1071px;top:116px;overflow:visible;" width="40" height="31" viewBox="0 0 40 31"><rect x="1" y="1" width="36" height="28" fill="#fafafa" stroke="#555" stroke-width="1.4"/><path d="M8.2 1 V29" stroke="#555" stroke-width="1.4"/><path d="M15.4 1 V29" stroke="#555" stroke-width="1.4"/><path d="M22.6 1 V29" stroke="#555" stroke-width="1.4"/><path d="M29.8 1 V29" stroke="#555" stroke-width="1.4"/><path d="M1 10.333333333333334 H37" stroke="#555" stroke-width="1.4"/><path d="M1 19.666666666666668 H37" stroke="#555" stroke-width="1.4"/><rect x="7.5" y="1.5" width="17" height="8.5" fill="#f4a0a8" stroke="#e03a3a" stroke-width="1.4"/>
<rect x="7.5" y="10.5" width="11" height="8" fill="#7fb8e8" stroke="#2f7fd0" stroke-width="1.4"/>
<rect x="7.5" y="19" width="19" height="9.5" fill="#f4a0a8" stroke="#e03a3a" stroke-width="1.4"/></svg><svg style="position:absolute;left:1126px;top:183px;overflow:visible;" width="8" height="5" viewBox="0 0 8 5"><path d="M0.7 0.7 L4.0 4.3 L7.3 0.7" fill="none" stroke="#3a3a3a" stroke-width="1.3"/></svg><svg style="position:absolute;left:1158px;top:116px;overflow:visible;" width="42" height="38" viewBox="0 0 42 38"><rect x="1" y="1" width="36" height="28" fill="#fafafa" stroke="#555" stroke-width="1.4"/><path d="M13.0 1 V29" stroke="#555" stroke-width="1.4"/><path d="M25.0 1 V29" stroke="#555" stroke-width="1.4"/><path d="M1 10.333333333333334 H37" stroke="#555" stroke-width="1.4"/><path d="M1 19.666666666666668 H37" stroke="#555" stroke-width="1.4"/><rect x="13" y="10.5" width="24.5" height="18" fill="#8cc0ec" stroke="#2f7fd0" stroke-width="1.4"/>
<path d="M13 19.5 H37.5 M25 10.5 V28.5" stroke="#2f7fd0" stroke-width="1.3"/>
<path d="M40 10 L26 26" stroke="#333" stroke-width="4.2" stroke-linecap="round"/><path d="M40 10 L26 26" stroke="#fff" stroke-width="1.8" stroke-linecap="round"/>
<path d="M17.5 35 C21 35 28 33 26 27 C23 24 19 27 19 30 C19 32 18 34 15 35 Z" fill="#6db0ea" stroke="#2f7fd0" stroke-width="1.2"/></svg><svg style="position:absolute;left:1194.5px;top:183px;overflow:visible;" width="8" height="5" viewBox="0 0 8 5"><path d="M0.7 0.7 L4.0 4.3 L7.3 0.7" fill="none" stroke="#3a3a3a" stroke-width="1.3"/></svg><svg style="position:absolute;left:1225px;top:116px;overflow:visible;" width="42" height="38" viewBox="0 0 42 38"><rect x="1" y="1" width="36" height="28" fill="#fafafa" stroke="#555" stroke-width="1.4"/><path d="M13.0 1 V29" stroke="#555" stroke-width="1.4"/><path d="M25.0 1 V29" stroke="#555" stroke-width="1.4"/><path d="M1 10.333333333333334 H37" stroke="#555" stroke-width="1.4"/><path d="M1 19.666666666666668 H37" stroke="#555" stroke-width="1.4"/><rect x="7.5" y="6.5" width="22.5" height="15" fill="#8cc0ec" stroke="#2f7fd0" stroke-width="1.6"/>
<path d="M40 10 L26 26" stroke="#333" stroke-width="4.2" stroke-linecap="round"/><path d="M40 10 L26 26" stroke="#fff" stroke-width="1.8" stroke-linecap="round"/>
<path d="M17.5 35 C21 35 28 33 26 27 C23 24 19 27 19 30 C19 32 18 34 15 35 Z" fill="#6db0ea" stroke="#2f7fd0" stroke-width="1.2"/></svg><svg style="position:absolute;left:1264.5px;top:183px;overflow:visible;" width="8" height="5" viewBox="0 0 8 5"><path d="M0.7 0.7 L4.0 4.3 L7.3 0.7" fill="none" stroke="#3a3a3a" stroke-width="1.3"/></svg><svg style="position:absolute;left:1301px;top:116px;overflow:visible;" width="44" height="31" viewBox="0 0 44 31"><rect x="3" y="1" width="36" height="28" fill="#fafafa" stroke="#555" stroke-width="1.4"/><path d="M15.0 1 V29" stroke="#555" stroke-width="1.4"/><path d="M27.0 1 V29" stroke="#555" stroke-width="1.4"/><path d="M3 15.0 H39" stroke="#555" stroke-width="1.4"/><rect x="8" y="9.5" width="33" height="10" fill="#8cc0ec" stroke="#2f7fd0" stroke-width="1.6"/>
<path d="M24.5 9.5 V19.5" stroke="#2f7fd0" stroke-width="1.5"/>
<path d="M1.5 14.5 H14 M8 7.5 L1.5 14.5 L8 21.5" fill="none" stroke="#2f8fdb" stroke-width="1.5"/><path d="M4 14.5 H14" stroke="#fff" stroke-width="2.5"/><path d="M3 13 H14 M3 16 H14" stroke="#2f8fdb" stroke-width="1"/></svg><svg style="position:absolute;left:1318px;top:184px;overflow:visible;" width="8" height="5" viewBox="0 0 8 5"><path d="M0.7 0.7 L4.0 4.3 L7.3 0.7" fill="none" stroke="#3a3a3a" stroke-width="1.4"/></svg><svg style="position:absolute;left:1359px;top:116px;overflow:visible;" width="42" height="31" viewBox="0 0 42 31"><rect x="1" y="1" width="36" height="28" fill="#fafafa" stroke="#555" stroke-width="1.4"/><path d="M13.0 1 V29" stroke="#555" stroke-width="1.4"/><path d="M25.0 1 V29" stroke="#555" stroke-width="1.4"/><path d="M1 15.0 H37" stroke="#555" stroke-width="1.4"/><rect x="5" y="9.5" width="22" height="10" fill="#8cc0ec" stroke="#2f7fd0" stroke-width="1.6"/>
<path d="M15.5 9.5 V19.5" stroke="#2f7fd0" stroke-width="1.5"/><path d="M27 9.5 L31 14.5 L27 19.5" fill="#8cc0ec" stroke="#2f7fd0" stroke-width="1.2"/>
<rect x="27.5" y="7" width="14" height="16" fill="#fff"/>
<path d="M30 8 L40 21 M40 8 L30 21" stroke="#e83a3a" stroke-width="1.5"/></svg><svg style="position:absolute;left:1375px;top:184px;overflow:visible;" width="8" height="5" viewBox="0 0 8 5"><path d="M0.7 0.7 L4.0 4.3 L7.3 0.7" fill="none" stroke="#3a3a3a" stroke-width="1.4"/></svg><svg style="position:absolute;left:1415px;top:109px;overflow:visible;" width="40" height="38" viewBox="0 0 40 38"><path d="M8 3 H30 M8 0.5 V5.5 M30 0.5 V5.5" stroke="#2f8fdb" stroke-width="1.5"/><rect x="1.5" y="9" width="36" height="28" fill="#fafafa" stroke="#555" stroke-width="1.4"/><path d="M13.5 9 V37" stroke="#555" stroke-width="1.4"/><path d="M25.5 9 V37" stroke="#555" stroke-width="1.4"/><path d="M1.5 18.333333333333336 H37.5" stroke="#555" stroke-width="1.4"/><path d="M1.5 27.666666666666668 H37.5" stroke="#555" stroke-width="1.4"/><rect x="11" y="18.3" width="16" height="9.3" fill="#8cc0ec" stroke="#2f7fd0" stroke-width="1.6"/></svg><svg style="position:absolute;left:1431px;top:182px;overflow:visible;" width="8" height="5" viewBox="0 0 8 5"><path d="M0.7 0.7 L4.0 4.3 L7.3 0.7" fill="none" stroke="#3a3a3a" stroke-width="1.4"/></svg><svg style="position:absolute;left:1489px;top:112px;overflow:visible;" width="19" height="20" viewBox="0 0 19 20"><path d="M17 3.5 V1 H1.5 L9.5 10 L1.5 19 H17 V16.5" fill="none" stroke="#333" stroke-width="1.5"/></svg><svg style="position:absolute;left:1594px;top:120px;overflow:visible;" width="8" height="5" viewBox="0 0 8 5"><path d="M0.7 0.7 L4.0 4.3 L7.3 0.7" fill="none" stroke="#3a3a3a" stroke-width="1.4"/></svg><svg style="position:absolute;left:1487px;top:145px;overflow:visible;" width="23" height="20" viewBox="0 0 23 20"><rect x="1" y="1" width="21" height="18" fill="#fff" stroke="#444" stroke-width="1.5"/><path d="M1 4 H22" stroke="#444" stroke-width="1.3"/><path d="M11.5 7 V15 M8.3 12 L11.5 15.3 L14.7 12" fill="none" stroke="#2f8fdb" stroke-width="1.5"/></svg><svg style="position:absolute;left:1539.5px;top:153px;overflow:visible;" width="7" height="4.5" viewBox="0 0 7 4.5"><path d="M0.7 0.7 L3.5 3.8 L6.3 0.7" fill="none" stroke="#3a3a3a" stroke-width="1.4"/></svg><svg style="position:absolute;left:1488px;top:177px;overflow:visible;" width="21" height="22" viewBox="0 0 21 22"><path d="M2 13.5 L12.5 2.5 L19.5 9.5 L9 20.5 Z" fill="#fff" stroke="#9b3ab5" stroke-width="1.5" stroke-linejoin="round"/><path d="M2 13.5 L6 9.5 L13 16.5 L9 20.5 Z" fill="#d7a8e6" stroke="#9b3ab5" stroke-width="1.5" stroke-linejoin="round"/></svg><svg style="position:absolute;left:1555px;top:186px;overflow:visible;" width="7" height="4.5" viewBox="0 0 7 4.5"><path d="M0.7 0.7 L3.5 3.8 L6.3 0.7" fill="none" stroke="#3a3a3a" stroke-width="1.4"/></svg><svg style="position:absolute;left:1620px;top:113px;overflow:visible;" width="40" height="36" viewBox="0 0 40 36"><text x="0" y="15" font-family="Liberation Sans" font-size="19" fill="#2f8fdb">A</text>
<text x="0.5" y="35" font-family="Liberation Sans" font-size="19" fill="#333">Z</text>
<path d="M16.5 7.5 H37.5 L29.5 18 V27.5 H24.5 V18 Z" fill="#f6f6f6" stroke="#444" stroke-width="1.4" stroke-linejoin="round"/></svg><svg style="position:absolute;left:1654px;top:183px;overflow:visible;" width="7" height="4.5" viewBox="0 0 7 4.5"><path d="M0.7 0.7 L3.5 3.8 L6.3 0.7" fill="none" stroke="#3a3a3a" stroke-width="1.4"/></svg><svg style="position:absolute;left:1678px;top:111px;overflow:visible;" width="40" height="40" viewBox="0 0 40 40"><circle cx="26" cy="14" r="12.5" fill="#f8f8f8" stroke="#444" stroke-width="1.5"/><path d="M17 23.5 L1.5 38" stroke="#444" stroke-width="1.6"/></svg><svg style="position:absolute;left:1717px;top:183px;overflow:visible;" width="7" height="4.5" viewBox="0 0 7 4.5"><path d="M0.7 0.7 L3.5 3.8 L6.3 0.7" fill="none" stroke="#3a3a3a" stroke-width="1.4"/></svg><svg style="position:absolute;left:1760px;top:112px;overflow:visible;" width="39" height="38" viewBox="0 0 39 38"><rect x="1.5" y="1.5" width="36" height="35" fill="#fff" stroke="#e5592b" stroke-width="2"/><rect x="6" y="6" width="12" height="11.5" fill="none" stroke="#e5592b" stroke-width="1.8"/><rect x="21.5" y="6" width="12" height="11.5" fill="none" stroke="#e5592b" stroke-width="1.8"/><rect x="6" y="21" width="12" height="11.5" fill="none" stroke="#e5592b" stroke-width="1.8"/><rect x="21.5" y="21" width="12" height="11.5" fill="none" stroke="#e5592b" stroke-width="1.8"/></svg><svg style="position:absolute;left:1840px;top:112px;overflow:visible;" width="40" height="39" viewBox="0 0 40 39"><rect x="1.5" y="1.5" width="35" height="35" fill="#fff" stroke="#555" stroke-width="1.6"/>
<rect x="2" y="2" width="34" height="4" fill="#aaa"/>
<path d="M2 11 H36 M2 19 H36 M2 27 H36 M12 27 V36 M24 27 V36" stroke="#888" stroke-width="1"/>
<circle cx="17" cy="15" r="10.5" fill="#fff" stroke="#555" stroke-width="1.6"/>
<path d="M24.5 22.5 L35 34" stroke="#555" stroke-width="2"/>
<rect x="11" y="12" width="3" height="7" fill="#ddd" stroke="#777" stroke-width="0.8"/><rect x="15" y="8" width="3" height="11" fill="#ddd" stroke="#777" stroke-width="0.8"/><rect x="19" y="10" width="3" height="9" fill="#2f8fdb"/></svg><svg style="position:absolute;left:1960px;top:209px;overflow:visible;" width="13" height="8" viewBox="0 0 13 8"><path d="M0.7 0.7 L6.5 7.3 L12.3 0.7" fill="none" stroke="#333" stroke-width="1.5"/></svg><svg style="position:absolute;left:120px;top:256px;overflow:visible;" width="13" height="7" viewBox="0 0 13 7"><path d="M0.7 0.7 L6.5 6.3 L12.3 0.7" fill="none" stroke="#333" stroke-width="1.6"/></svg><div style="position:absolute;left:152.5px;top:250px;width:3px;height:3px;background:#333;border-radius:50%"></div><div style="position:absolute;left:152.5px;top:256px;width:3px;height:3px;background:#333;border-radius:50%"></div><div style="position:absolute;left:152.5px;top:262px;width:3px;height:3px;background:#333;border-radius:50%"></div><svg style="position:absolute;left:175px;top:249px;overflow:visible;" width="17" height="16" viewBox="0 0 17 16"><path d="M1 1 L15.5 15 M15.5 1 L1 15" stroke="#8a8a8a" stroke-width="1.2"/></svg><svg style="position:absolute;left:203px;top:249px;overflow:visible;" width="22" height="16" viewBox="0 0 22 16"><path d="M1 9 L7 15 L21 1" fill="none" stroke="#b8b8b8" stroke-width="1.3"/></svg><div class="tx" style="left:236.00px;top:245.75px;font-size:20.29px;line-height:20.29px;color:#222;font-weight:400;font-family:'Liberation Serif';font-style:italic;transform:scaleX(1.2983);">fx</div><svg style="position:absolute;left:262px;top:254.5px;overflow:visible;" width="12" height="7" viewBox="0 0 12 7"><path d="M0.7 0.7 L6.0 6.3 L11.3 0.7" fill="none" stroke="#777" stroke-width="1.1"/></svg><svg style="position:absolute;left:1966px;top:251px" width="13" height="7"><path d="M0.7 6.3 L6.5 0.7 L12.3 6.3" fill="none" stroke="#444" stroke-width="1.4"/></svg><div class="tx" style="left:470.68px;top:333.61px;font-size:12.46px;line-height:12.46px;color:#444;font-weight:400;font-family:'Liberation Sans';transform:scaleX(1.0714);">B</div><div class="tx" style="left:666.75px;top:333.61px;font-size:12.46px;line-height:12.46px;color:#444;font-weight:400;font-family:'Liberation Sans';transform:scaleX(0.8333);">C</div><div class="tx" style="left:761.81px;top:333.61px;font-size:12.46px;line-height:12.46px;color:#444;font-weight:400;font-family:'Liberation Sans';transform:scaleX(0.9375);">D</div><div class="tx" style="left:857.68px;top:333.61px;font-size:12.46px;line-height:12.46px;color:#444;font-weight:400;font-family:'Liberation Sans';transform:scaleX(1.0714);">E</div><div class="tx" style="left:953.68px;top:333.61px;font-size:12.46px;line-height:12.46px;color:#444;font-weight:400;font-family:'Liberation Sans';transform:scaleX(1.0714);">F</div><div class="tx" style="left:172.40px;top:333.61px;font-size:12.46px;line-height:12.46px;color:#107c41;font-weight:400;font-family:'Liberation Sans';transform:scaleX(0.9556);">A</div><div class="tx" style="left:1131.50px;top:333.61px;font-size:12.46px;line-height:12.46px;color:#444;font-weight:400;font-family:'Liberation Sans';transform:scaleX(0.9444);">G</div><div class="tx" style="left:7.60px;top:375.78px;font-size:12.61px;line-height:12.61px;color:#444;font-weight:400;font-family:'Liberation Sans';transform:scaleX(0.9714);">1</div><div class="tx" style="left:7.60px;top:413.78px;font-size:12.61px;line-height:12.61px;color:#444;font-weight:400;font-family:'Liberation Sans';transform:scaleX(0.9714);">2</div><div class="tx" style="left:7.60px;top:450.78px;font-size:12.61px;line-height:12.61px;color:#444;font-weight:400;font-family:'Liberation Sans';transform:scaleX(0.9714);">3</div><div class="tx" style="left:7.60px;top:488.78px;font-size:12.61px;line-height:12.61px;color:#107c41;font-weight:400;font-family:'Liberation Sans';transform:scaleX(0.9714);">4</div><div class="tx" style="left:7.60px;top:525.73px;font-size:12.61px;line-height:12.61px;color:#444;font-weight:400;font-family:'Liberation Sans';transform:scaleX(0.9714);">5</div><div class="tx" style="left:7.60px;top:563.68px;font-size:12.61px;line-height:12.61px;color:#444;font-weight:400;font-family:'Liberation Sans';transform:scaleX(0.9714);">6</div><div class="tx" style="left:7.60px;top:600.63px;font-size:12.61px;line-height:12.61px;color:#444;font-weight:400;font-family:'Liberation Sans';transform:scaleX(0.9714);">7</div><div class="tx" style="left:7.60px;top:638.58px;font-size:12.61px;line-height:12.61px;color:#444;font-weight:400;font-family:'Liberation Sans';transform:scaleX(0.9714);">8</div><div class="tx" style="left:7.60px;top:675.53px;font-size:12.61px;line-height:12.61px;color:#444;font-weight:400;font-family:'Liberation Sans';transform:scaleX(0.9714);">9</div><div class="tx" style="left:5.00px;top:713.98px;font-size:12.61px;line-height:12.61px;color:#444;font-weight:400;font-family:'Liberation Sans';transform:scaleX(0.9277);">10</div><div class="tx" style="left:5.00px;top:750.93px;font-size:12.61px;line-height:12.61px;color:#444;font-weight:400;font-family:'Liberation Sans';transform:scaleX(0.9941);">11</div><div class="tx" style="left:5.00px;top:788.88px;font-size:12.61px;line-height:12.61px;color:#444;font-weight:400;font-family:'Liberation Sans';transform:scaleX(0.9277);">12</div><div class="tx" style="left:5.00px;top:825.83px;font-size:12.61px;line-height:12.61px;color:#444;font-weight:400;font-family:'Liberation Sans';transform:scaleX(0.9277);">13</div><div class="tx" style="left:5.00px;top:862.78px;font-size:12.61px;line-height:12.61px;color:#444;font-weight:400;font-family:'Liberation Sans';transform:scaleX(0.9277);">14</div><div class="tx" style="left:5.00px;top:1099.78px;font-size:12.61px;line-height:12.61px;color:#444;font-weight:400;font-family:'Liberation Sans';transform:scaleX(0.9277);">15</div><div class="tx" style="left:28.69px;top:355.27px;font-size:29.57px;line-height:29.57px;color:#000;font-weight:700;font-family:'Liberation Sans';transform:scaleX(0.9112);">Costs summary</div><div class="tx" style="left:625.50px;top:450.68px;font-size:12.50px;line-height:12.50px;color:#ffffff;font-weight:400;font-family:'Liberation Sans';transform:scaleX(1.0504);">Solution</div><div class="tx" style="left:27.40px;top:487.57px;font-size:12.50px;line-height:12.50px;color:#ffffff;font-weight:400;font-family:'Liberation Sans';transform:scaleX(0.9599);">Source.Name</div><div class="tx" style="left:331.00px;top:487.57px;font-size:12.50px;line-height:12.50px;color:#ffffff;font-weight:400;font-family:'Liberation Sans';transform:scaleX(1.0366);">Values</div><div class="tx" style="left:625.50px;top:487.57px;font-size:12.50px;line-height:12.50px;color:#ffffff;font-weight:400;font-family:'Liberation Sans';transform:scaleX(1.0405);">Solution 1</div><div class="tx" style="left:721.30px;top:487.57px;font-size:12.50px;line-height:12.50px;color:#ffffff;font-weight:400;font-family:'Liberation Sans';transform:scaleX(1.0405);">Solution 2</div><div class="tx" style="left:817.20px;top:487.57px;font-size:12.50px;line-height:12.50px;color:#ffffff;font-weight:400;font-family:'Liberation Sans';transform:scaleX(1.0405);">Solution 3</div><div class="tx" style="left:912.70px;top:487.57px;font-size:12.50px;line-height:12.50px;color:#ffffff;font-weight:400;font-family:'Liberation Sans';transform:scaleX(1.0405);">Solution 4</div><div class="tx" style="left:331.30px;top:525.98px;font-size:12.50px;line-height:12.50px;color:#1a1a1a;font-weight:400;font-family:'Liberation Sans';transform:scaleX(0.9668);">Sum of Life-cycle cost (CHF)</div><div class="tx" style="left:651.92px;top:525.98px;font-size:12.50px;line-height:12.50px;color:#1a1a1a;font-weight:400;font-family:'Liberation Sans';transform:scaleX(0.9656);">6’698 kCHF</div><div class="tx" style="left:746.92px;top:525.98px;font-size:12.50px;line-height:12.50px;color:#1a1a1a;font-weight:400;font-family:'Liberation Sans';transform:scaleX(0.9656);">6’863 kCHF</div><div class="tx" style="left:842.92px;top:525.98px;font-size:12.50px;line-height:12.50px;color:#1a1a1a;font-weight:400;font-family:'Liberation Sans';transform:scaleX(0.9656);">6’869 kCHF</div><div class="tx" style="left:932.21px;top:525.98px;font-size:12.50px;line-height:12.50px;color:#1a1a1a;font-weight:400;font-family:'Liberation Sans';transform:scaleX(0.9656);">10’222 kCHF</div><div class="tx" style="left:331.30px;top:562.93px;font-size:12.50px;line-height:12.50px;color:#1a1a1a;font-weight:400;font-family:'Liberation Sans';transform:scaleX(0.9658);">Sum of Investment (CHF)</div><div class="tx" style="left:651.92px;top:562.93px;font-size:12.50px;line-height:12.50px;color:#1a1a1a;font-weight:400;font-family:'Liberation Sans';transform:scaleX(0.9656);">5’502 kCHF</div><div class="tx" style="left:746.92px;top:562.93px;font-size:12.50px;line-height:12.50px;color:#1a1a1a;font-weight:400;font-family:'Liberation Sans';transform:scaleX(0.9656);">5’701 kCHF</div><div class="tx" style="left:842.92px;top:562.93px;font-size:12.50px;line-height:12.50px;color:#1a1a1a;font-weight:400;font-family:'Liberation Sans';transform:scaleX(0.9656);">5’726 kCHF</div><div class="tx" style="left:938.92px;top:562.93px;font-size:12.50px;line-height:12.50px;color:#1a1a1a;font-weight:400;font-family:'Liberation Sans';transform:scaleX(0.9656);">7’643 kCHF</div><div class="tx" style="left:331.30px;top:599.88px;font-size:12.50px;line-height:12.50px;color:#1a1a1a;font-weight:400;font-family:'Liberation Sans';transform:scaleX(0.9752);">Sum of CO2 emissions (kg-CO2)</div><div class="tx" style="left:679.25px;top:599.88px;font-size:12.50px;line-height:12.50px;color:#1a1a1a;font-weight:400;font-family:'Liberation Sans';transform:scaleX(0.9656);">9’404 t</div><div class="tx" style="left:774.25px;top:599.88px;font-size:12.50px;line-height:12.50px;color:#1a1a1a;font-weight:400;font-family:'Liberation Sans';transform:scaleX(0.9656);">6’579 t</div><div class="tx" style="left:870.25px;top:599.88px;font-size:12.50px;line-height:12.50px;color:#1a1a1a;font-weight:400;font-family:'Liberation Sans';transform:scaleX(0.9656);">6’434 t</div><div class="tx" style="left:966.25px;top:599.88px;font-size:12.50px;line-height:12.50px;color:#1a1a1a;font-weight:400;font-family:'Liberation Sans';transform:scaleX(0.9656);">4’949 t</div><div class="tx" style="left:331.30px;top:637.83px;font-size:12.50px;line-height:12.50px;color:#1a1a1a;font-weight:400;font-family:'Liberation Sans';transform:scaleX(1.0067);">Sum of Annualized life-cycle cost (CHF/year)</div><div class="tx" style="left:634.99px;top:637.83px;font-size:12.50px;line-height:12.50px;color:#1a1a1a;font-weight:400;font-family:'Liberation Sans';transform:scaleX(0.9656);">260 kCHF/Jahr</div><div class="tx" style="left:729.99px;top:637.83px;font-size:12.50px;line-height:12.50px;color:#1a1a1a;font-weight:400;font-family:'Liberation Sans';transform:scaleX(0.9656);">267 kCHF/Jahr</div><div class="tx" style="left:825.99px;top:637.83px;font-size:12.50px;line-height:12.50px;color:#1a1a1a;font-weight:400;font-family:'Liberation Sans';transform:scaleX(0.9656);">267 kCHF/Jahr</div><div class="tx" style="left:921.99px;top:637.83px;font-size:12.50px;line-height:12.50px;color:#1a1a1a;font-weight:400;font-family:'Liberation Sans';transform:scaleX(0.9656);">397 kCHF/Jahr</div><div class="tx" style="left:331.30px;top:674.78px;font-size:12.50px;line-height:12.50px;color:#1a1a1a;font-weight:400;font-family:'Liberation Sans';transform:scaleX(0.9668);">Sum of Life-cycle cost (CHF)</div><div class="tx" style="left:651.92px;top:674.78px;font-size:12.50px;line-height:12.50px;color:#1a1a1a;font-weight:400;font-family:'Liberation Sans';transform:scaleX(0.9656);">8’064 kCHF</div><div class="tx" style="left:746.92px;top:674.78px;font-size:12.50px;line-height:12.50px;color:#1a1a1a;font-weight:400;font-family:'Liberation Sans';transform:scaleX(0.9656);">9’556 kCHF</div><div class="tx" style="left:842.92px;top:674.78px;font-size:12.50px;line-height:12.50px;color:#1a1a1a;font-weight:400;font-family:'Liberation Sans';transform:scaleX(0.9656);">9’640 kCHF</div><div class="tx" style="left:933.10px;top:674.78px;font-size:12.50px;line-height:12.50px;color:#1a1a1a;font-weight:400;font-family:'Liberation Sans';transform:scaleX(0.9656);">11’136 kCHF</div><div class="tx" style="left:331.30px;top:712.73px;font-size:12.50px;line-height:12.50px;color:#1a1a1a;font-weight:400;font-family:'Liberation Sans';transform:scaleX(0.9658);">Sum of Investment (CHF)</div><div class="tx" style="left:651.92px;top:712.73px;font-size:12.50px;line-height:12.50px;color:#1a1a1a;font-weight:400;font-family:'Liberation Sans';transform:scaleX(0.9656);">5’817 kCHF</div><div class="tx" style="left:746.92px;top:712.73px;font-size:12.50px;line-height:12.50px;color:#1a1a1a;font-weight:400;font-family:'Liberation Sans';transform:scaleX(0.9656);">6’807 kCHF</div><div class="tx" style="left:842.92px;top:712.73px;font-size:12.50px;line-height:12.50px;color:#1a1a1a;font-weight:400;font-family:'Liberation Sans';transform:scaleX(0.9656);">6’735 kCHF</div><div class="tx" style="left:938.92px;top:712.73px;font-size:12.50px;line-height:12.50px;color:#1a1a1a;font-weight:400;font-family:'Liberation Sans';transform:scaleX(0.9656);">7’665 kCHF</div><div class="tx" style="left:331.30px;top:749.68px;font-size:12.50px;line-height:12.50px;color:#1a1a1a;font-weight:400;font-family:'Liberation Sans';transform:scaleX(0.9752);">Sum of CO2 emissions (kg-CO2)</div><div class="tx" style="left:679.25px;top:749.68px;font-size:12.50px;line-height:12.50px;color:#1a1a1a;font-weight:400;font-family:'Liberation Sans';transform:scaleX(0.9656);">6’234 t</div><div class="tx" style="left:774.25px;top:749.68px;font-size:12.50px;line-height:12.50px;color:#1a1a1a;font-weight:400;font-family:'Liberation Sans';transform:scaleX(0.9656);">5’806 t</div><div class="tx" style="left:870.25px;top:749.68px;font-size:12.50px;line-height:12.50px;color:#1a1a1a;font-weight:400;font-family:'Liberation Sans';transform:scaleX(0.9656);">5’377 t</div><div class="tx" style="left:966.25px;top:749.68px;font-size:12.50px;line-height:12.50px;color:#1a1a1a;font-weight:400;font-family:'Liberation Sans';transform:scaleX(0.9656);">4’949 t</div><div class="tx" style="left:331.30px;top:787.62px;font-size:12.50px;line-height:12.50px;color:#1a1a1a;font-weight:400;font-family:'Liberation Sans';transform:scaleX(1.0067);">Sum of Annualized life-cycle cost (CHF/year)</div><div class="tx" style="left:634.99px;top:787.62px;font-size:12.50px;line-height:12.50px;color:#1a1a1a;font-weight:400;font-family:'Liberation Sans';transform:scaleX(0.9656);">313 kCHF/Jahr</div><div class="tx" style="left:729.99px;top:787.62px;font-size:12.50px;line-height:12.50px;color:#1a1a1a;font-weight:400;font-family:'Liberation Sans';transform:scaleX(0.9656);">371 kCHF/Jahr</div><div class="tx" style="left:825.99px;top:787.62px;font-size:12.50px;line-height:12.50px;color:#1a1a1a;font-weight:400;font-family:'Liberation Sans';transform:scaleX(0.9656);">375 kCHF/Jahr</div><div class="tx" style="left:921.99px;top:787.62px;font-size:12.50px;line-height:12.50px;color:#1a1a1a;font-weight:400;font-family:'Liberation Sans';transform:scaleX(0.9656);">433 kCHF/Jahr</div><div class="tx" style="left:27.40px;top:525.98px;font-size:12.50px;line-height:12.50px;color:#ffffff;font-weight:700;font-family:'Liberation Sans';transform:scaleX(0.9742);">Summary-22-02024-V1.xlsx</div><div class="tx" style="left:27.40px;top:674.78px;font-size:12.50px;line-height:12.50px;color:#ffffff;font-weight:700;font-family:'Liberation Sans';transform:scaleX(0.9555);">Summary-22-02024-V2 (increaseicity price).xlsx</div><div style="position:absolute;left:306px;top:479px;width:21px;height:21px;background:linear-gradient(#fdfdfd,#e9e9ec);border:1px solid #cfcfcf;box-sizing:border-box"></div><svg style="position:absolute;left:312.0px;top:487.0px;overflow:visible;" width="9" height="5" viewBox="0 0 9 5"><path d="M0 0 H9 L4.5 4.5 Z" fill="#505050"/></svg><div style="position:absolute;left:696px;top:441px;width:22px;height:21px;background:linear-gradient(#fdfdfd,#e9e9ec);border:1px solid #cfcfcf;box-sizing:border-box"></div><svg style="position:absolute;left:702.5px;top:449.0px;overflow:visible;" width="9" height="5" viewBox="0 0 9 5"><path d="M0 0 H9 L4.5 4.5 Z" fill="#505050"/></svg><div class="tx" style="left:1196.22px;top:348.25px;font-size:29.71px;line-height:29.71px;color:#454545;font-weight:400;font-family:'Liberation Sans';transform:scaleX(0.8887);">PivotTable Fields</div><div class="tx" style="left:1199.50px;top:400.43px;font-size:16.09px;line-height:16.09px;color:#262626;font-weight:400;font-family:'Liberation Sans';transform:scaleX(0.9840);">Choose fields to add to report:</div><div class="tx" style="left:1206.00px;top:449.23px;font-size:16.09px;line-height:16.09px;color:#777;font-weight:400;font-family:'Liberation Sans';transform:scaleX(0.9000);">Search</div><svg style="position:absolute;left:1954px;top:446px;overflow:visible;" width="25" height="24" viewBox="0 0 25 24"><circle cx="14" cy="9.5" r="7" fill="none" stroke="#444" stroke-width="1.4"/><path d="M9 14.5 L2 21.5" stroke="#444" stroke-width="1.6"/></svg><svg style="position:absolute;left:1916px;top:360px;overflow:visible;" width="17" height="10" viewBox="0 0 17 10"><path d="M0.7 0.7 L8.5 9.3 L16.3 0.7" fill="none" stroke="#333" stroke-width="1.5"/></svg><svg style="position:absolute;left:1960px;top:358px;overflow:visible;" width="14" height="14" viewBox="0 0 14 14"><path d="M1 1 L13 13 M13 1 L1 13" stroke="#333" stroke-width="1.4"/></svg><svg style="position:absolute;left:1933px;top:397px;overflow:visible;" width="22" height="22" viewBox="0 0 22 22"><path d="M11 1.5 L13.3 4.2 L16.8 3.6 L17.5 7.1 L20.5 9.1 L18.8 12.2 L20 15.5 L16.6 16.6 L15.4 20 L12.2 18.8 L9.1 20.5 L7.1 17.5 L3.6 16.8 L4.2 13.3 L1.5 11 L4.2 8.7 L3.6 5.2 L7.1 4.5 L9.1 1.5 Z" fill="none" stroke="#333" stroke-width="1.3" stroke-linejoin="round" transform="rotate(15 11 11)"/>
<circle cx="11" cy="11" r="3.8" fill="none" stroke="#333" stroke-width="1.3"/></svg><svg style="position:absolute;left:1964px;top:407px;overflow:visible;" width="8" height="5" viewBox="0 0 8 5"><path d="M0.7 0.7 L4.0 4.3 L7.3 0.7" fill="none" stroke="#333" stroke-width="1.5"/></svg><div style="position:absolute;left:1199px;top:496px;width:759px;height:248px;overflow:hidden"><div style="position:absolute;left:4px;top:-9.4px;width:17px;height:17px;background:#107c41"></div><svg style="position:absolute;left:4px;top:-9.4px" width="17" height="17"><path d="M4 8.5 L7.2 11.7 L13.2 5.5" fill="none" stroke="#fff" stroke-width="1.4"/></svg><div class="tx" style="left:28.00px;top:-5.33px;font-size:15.80px;line-height:15.80px;color:#1a1a1a;font-weight:700;font-family:'Liberation Sans';transform:scaleX(0.9625);">Annualized life-cycle cost (CHF/year)</div><div style="position:absolute;left:4px;top:18.6px;width:17px;height:17px;border:1px solid #666;box-sizing:border-box;background:#fff"></div><div class="tx" style="left:28.00px;top:22.67px;font-size:15.80px;line-height:15.80px;color:#3a3a3a;font-weight:400;font-family:'Liberation Sans';transform:scaleX(0.9888);">Capital recovery factor</div><div style="position:absolute;left:4px;top:46.6px;width:17px;height:17px;background:#107c41"></div><svg style="position:absolute;left:4px;top:46.6px" width="17" height="17"><path d="M4 8.5 L7.2 11.7 L13.2 5.5" fill="none" stroke="#fff" stroke-width="1.4"/></svg><div class="tx" style="left:28.00px;top:50.67px;font-size:15.80px;line-height:15.80px;color:#1a1a1a;font-weight:700;font-family:'Liberation Sans';transform:scaleX(0.9489);">CO2 emissions (kg-CO2)</div><div style="position:absolute;left:4px;top:74.6px;width:17px;height:17px;background:#107c41"></div><svg style="position:absolute;left:4px;top:74.6px" width="17" height="17"><path d="M4 8.5 L7.2 11.7 L13.2 5.5" fill="none" stroke="#fff" stroke-width="1.4"/></svg><div class="tx" style="left:27.01px;top:78.67px;font-size:15.80px;line-height:15.80px;color:#1a1a1a;font-weight:700;font-family:'Liberation Sans';transform:scaleX(0.9883);">Investment (CHF)</div><div style="position:absolute;left:4px;top:102.6px;width:17px;height:17px;border:1px solid #666;box-sizing:border-box;background:#fff"></div><div class="tx" style="left:27.04px;top:106.67px;font-size:15.80px;line-height:15.80px;color:#3a3a3a;font-weight:400;font-family:'Liberation Sans';transform:scaleX(0.9611);">Imports cost (CHF)</div><div style="position:absolute;left:4px;top:130.6px;width:17px;height:17px;border:1px solid #666;box-sizing:border-box;background:#fff"></div><div class="tx" style="left:27.06px;top:134.67px;font-size:15.80px;line-height:15.80px;color:#3a3a3a;font-weight:400;font-family:'Liberation Sans';transform:scaleX(0.9417);">Exports revenue (CHF)</div><div style="position:absolute;left:4px;top:158.6px;width:17px;height:17px;border:1px solid #666;box-sizing:border-box;background:#fff"></div><div class="tx" style="left:28.00px;top:162.67px;font-size:15.80px;line-height:15.80px;color:#3a3a3a;font-weight:400;font-family:'Liberation Sans';transform:scaleX(0.9617);">O&amp;M cost (CHF)</div><div style="position:absolute;left:4px;top:186.6px;width:17px;height:17px;border:1px solid #666;box-sizing:border-box;background:#fff"></div><div class="tx" style="left:27.04px;top:190.67px;font-size:15.80px;line-height:15.80px;color:#3a3a3a;font-weight:400;font-family:'Liberation Sans';transform:scaleX(0.9562);">Replacement cost (CHF)</div><div style="position:absolute;left:4px;top:214.6px;width:17px;height:17px;border:1px solid #666;box-sizing:border-box;background:#fff"></div><div class="tx" style="left:28.00px;top:218.67px;font-size:15.80px;line-height:15.80px;color:#3a3a3a;font-weight:400;font-family:'Liberation Sans';transform:scaleX(0.9356);">Salvage revenue (CHF)</div><div style="position:absolute;left:4px;top:242.6px;width:17px;height:17px;border:1px solid #666;box-sizing:border-box;background:#fff"></div></div><svg style="position:absolute;left:1962px;top:503px;overflow:visible;" width="12" height="8" viewBox="0 0 12 8"><path d="M0.5 7.5 L6 1 L11.5 7.5 Z" fill="#6e6e6e" stroke="#6e6e6e" stroke-linejoin="round"/></svg><svg style="position:absolute;left:1962px;top:729px;overflow:visible;" width="12" height="8" viewBox="0 0 12 8"><path d="M0.5 0.5 L6 7 L11.5 0.5 Z" fill="#6e6e6e" stroke="#6e6e6e" stroke-linejoin="round"/></svg><div style="position:absolute;left:1963px;top:566px;width:11px;height:94px;background:#6e6e6e"></div><div class="tx" style="left:1202.97px;top:773.57px;font-size:15.22px;line-height:15.22px;color:#262626;font-weight:400;font-family:'Liberation Sans';transform:scaleX(1.0278);">Drag fields between areas below:</div><svg style="position:absolute;left:1207px;top:816px;overflow:visible;" width="15" height="15" viewBox="0 0 15 15"><path d="M0.5 0.5 H14.5 L9.5 6.5 V14.5 H5.5 V6.5 Z" fill="#7a7a7a"/></svg><div class="tx" style="left:1230.88px;top:816.88px;font-size:16.38px;line-height:16.38px;color:#262626;font-weight:400;font-family:'Liberation Sans';transform:scaleX(0.9203);">Filters</div><svg style="position:absolute;left:1600px;top:817px;overflow:visible;" width="13" height="13" viewBox="0 0 13 13"><rect x="0" y="0" width="3" height="13" fill="#888"/><rect x="4.5" y="0" width="1.3" height="13" fill="#888"/><rect x="7.5" y="0" width="1.3" height="13" fill="#888"/><rect x="10.5" y="0" width="1.3" height="13" fill="#888"/></svg><div class="tx" style="left:1622.00px;top:816.88px;font-size:16.38px;line-height:16.38px;color:#262626;font-weight:400;font-family:'Liberation Sans';transform:scaleX(0.9166);">Columns</div><svg style="position:absolute;left:1208px;top:962px;overflow:visible;" width="14" height="13" viewBox="0 0 14 13"><rect x="0" y="0" width="14" height="3" fill="#888"/><rect x="0" y="4.5" width="14" height="1.3" fill="#888"/><rect x="0" y="7.5" width="14" height="1.3" fill="#888"/><rect x="0" y="10.5" width="14" height="1.3" fill="#888"/></svg><div class="tx" style="left:1230.11px;top:962.53px;font-size:16.67px;line-height:16.67px;color:#262626;font-weight:400;font-family:'Liberation Sans';transform:scaleX(0.8928);">Rows</div><svg style="position:absolute;left:1599px;top:962px;overflow:visible;" width="14" height="13" viewBox="0 0 14 13"><path d="M13 3 V0.8 H1 L6.5 6.5 L1 12.2 H13 V10" fill="none" stroke="#777" stroke-width="1.3"/></svg><div class="tx" style="left:1622.00px;top:962.53px;font-size:16.67px;line-height:16.67px;color:#262626;font-weight:400;font-family:'Liberation Sans';transform:scaleX(0.9116);">Values</div><div class="tx" style="left:1603.70px;top:848.83px;font-size:15.50px;line-height:15.50px;color:#262626;font-weight:400;font-family:'Liberation Sans';transform:scaleX(1.0326);">Solution</div><svg style="position:absolute;left:1961px;top:853px;overflow:visible;" width="8" height="5" viewBox="0 0 8 5"><path d="M0.7 0.7 L4.0 4.3 L7.3 0.7" fill="none" stroke="#333" stroke-width="1.5"/></svg><div class="tx" style="left:1212.40px;top:993.62px;font-size:15.50px;line-height:15.50px;color:#262626;font-weight:400;font-family:'Liberation Sans';transform:scaleX(0.9624);">Source.Name</div><svg style="position:absolute;left:1564px;top:998px;overflow:visible;" width="8" height="5" viewBox="0 0 8 5"><path d="M0.7 0.7 L4.0 4.3 L7.3 0.7" fill="none" stroke="#333" stroke-width="1.5"/></svg><div class="tx" style="left:1235.00px;top:1022.92px;font-size:15.50px;line-height:15.50px;color:#262626;font-weight:400;font-family:'Liberation Sans';transform:scaleX(0.9464);">Values</div><svg style="position:absolute;left:1213px;top:1023px;overflow:visible;" width="14" height="14" viewBox="0 0 14 14"><path d="M13 2.5 V0.8 H1 L6.5 6.5 L1 12.2 H13 V10.5" fill="none" stroke="#555" stroke-width="1.2"/></svg><svg style="position:absolute;left:1564px;top:1027px;overflow:visible;" width="8" height="5" viewBox="0 0 8 5"><path d="M0.7 0.7 L4.0 4.3 L7.3 0.7" fill="none" stroke="#333" stroke-width="1.5"/></svg><div class="tx" style="left:1604.00px;top:993.62px;font-size:15.50px;line-height:15.50px;color:#262626;font-weight:400;font-family:'Liberation Sans';transform:scaleX(0.9751);">Sum of Life-cycle cost (CHF)</div><svg style="position:absolute;left:1939px;top:998px;overflow:visible;" width="8" height="5" viewBox="0 0 8 5"><path d="M0.7 0.7 L4.0 4.3 L7.3 0.7" fill="none" stroke="#333" stroke-width="1.5"/></svg><div class="tx" style="left:1604.00px;top:1022.62px;font-size:15.50px;line-height:15.50px;color:#262626;font-weight:400;font-family:'Liberation Sans';transform:scaleX(0.9684);">Sum of Investment (CHF)</div><svg style="position:absolute;left:1939px;top:1027px;overflow:visible;" width="8" height="5" viewBox="0 0 8 5"><path d="M0.7 0.7 L4.0 4.3 L7.3 0.7" fill="none" stroke="#333" stroke-width="1.5"/></svg><div class="tx" style="left:1604.00px;top:1051.62px;font-size:15.50px;line-height:15.50px;color:#262626;font-weight:400;font-family:'Liberation Sans';transform:scaleX(0.9657);">Sum of CO2 emissions (kg-CO2)</div><svg style="position:absolute;left:1939px;top:1056px;overflow:visible;" width="8" height="5" viewBox="0 0 8 5"><path d="M0.7 0.7 L4.0 4.3 L7.3 0.7" fill="none" stroke="#333" stroke-width="1.5"/></svg><div class="tx" style="left:1604.00px;top:1080.62px;font-size:15.50px;line-height:15.50px;color:#262626;font-weight:400;font-family:'Liberation Sans';transform:scaleX(0.9624);">Sum of Annualized life-cycle cost (CHF/year)</div><svg style="position:absolute;left:1939px;top:1085px;overflow:visible;" width="8" height="5" viewBox="0 0 8 5"><path d="M0.7 0.7 L4.0 4.3 L7.3 0.7" fill="none" stroke="#333" stroke-width="1.5"/></svg><div style="position:absolute;left:1591px;top:1086px;width:405px;height:34px;background:#f0f0f0"></div><div style="position:absolute;left:1202px;top:1086px;width:381px;height:34px;background:#f0f0f0"></div><div style="position:absolute;left:1916px;top:1113px;width:64px;height:10px;background:#fafafa;border:1px solid #d6d6d6;box-sizing:border-box"></div><div style="position:absolute;left:1206px;top:1117px;width:16px;height:3px;background:#8a8a8a"></div><svg style="position:absolute;left:1962px;top:990px;overflow:visible;" width="14" height="10" viewBox="0 0 14 10"><path d="M1 9 L7 1.5 L13 9 Z" fill="#6e6e6e" stroke="#6e6e6e" stroke-linejoin="round"/></svg><div style="position:absolute;left:1963px;top:1007px;width:12px;height:50px;background:#6e6e6e"></div><svg style="position:absolute;left:1962px;top:1072px;overflow:visible;" width="14" height="9" viewBox="0 0 14 9"><path d="M1 1 L7 8 L13 1 Z" fill="#6e6e6e" stroke="#6e6e6e" stroke-linejoin="round"/></svg><svg style="position:absolute;left:1162px;top:337px;overflow:visible;" width="12" height="9" viewBox="0 0 12 9"><path d="M0.8 8.3 L6 1 L11.2 8.3 Z" fill="#707070" stroke="#707070" stroke-linejoin="round"/></svg><div style="position:absolute;left:1162.5px;top:352.5px;width:11.5px;height:73px;background:#707070;border-radius:6px"></div><svg style="position:absolute;left:1162px;top:1103px;overflow:visible;" width="12" height="9" viewBox="0 0 12 9"><path d="M0.8 0.7 L6 8 L11.2 0.7 Z" fill="#707070" stroke="#707070" stroke-linejoin="round"/></svg><div style="position:absolute;left:17px;top:503px;width:315px;height:48px;border:9px solid #48d45a;border-bottom-width:8.3px;box-sizing:border-box"></div><div style="position:absolute;left:17px;top:649.5px;width:315px;height:48.0px;border:9px solid #48d45a;border-bottom-width:7.8px;box-sizing:border-box"></div><div style="position:absolute;left:616.5px;top:463px;width:386.0px;height:48.30000000000001px;border:8.8px solid #48d45a;border-bottom-width:8.8px;box-sizing:border-box"></div><div style="position:absolute;left:1578.3px;top:794px;width:421.70000000000005px;height:105.60000000000002px;border:9px solid #48d45a;border-bottom-width:9px;box-sizing:border-box"></div><div style="position:absolute;left:1187.4px;top:946.3px;width:399.6999999999998px;height:79.40000000000009px;border:9px solid #48d45a;border-bottom-width:9px;box-sizing:border-box"></div><div style="position:absolute;left:129.8px;top:399.0px;width:89.6px;height:89.6px;background:#48d45a;border-radius:50%"></div><div style="position:absolute;left:510.8px;top:439.0px;width:89.6px;height:89.6px;background:#48d45a;border-radius:50%"></div><div style="position:absolute;left:1493.9px;top:815.5px;width:89.6px;height:89.6px;background:#48d45a;border-radius:50%"></div><div style="position:absolute;left:1102.4px;top:950.0px;width:89.6px;height:89.6px;background:#48d45a;border-radius:50%"></div><div class="tx" style="left:161.50px;top:419.97px;font-size:47.68px;line-height:47.68px;color:#fff;font-weight:700;font-family:'Liberation Sans';transform:scaleX(0.7000);">1</div><div class="tx" style="left:542.02px;top:459.26px;font-size:47.10px;line-height:47.10px;color:#fff;font-weight:700;font-family:'Liberation Sans';transform:scaleX(0.9833);">2</div><div class="tx" style="left:1525.00px;top:835.85px;font-size:47.83px;line-height:47.83px;color:#fff;font-weight:700;font-family:'Liberation Sans';transform:scaleX(1.0000);">2</div><div class="tx" style="left:1134.76px;top:971.59px;font-size:46.96px;line-height:46.96px;color:#fff;font-weight:700;font-family:'Liberation Sans';transform:scaleX(0.7696);">1</div>
</body></html>
